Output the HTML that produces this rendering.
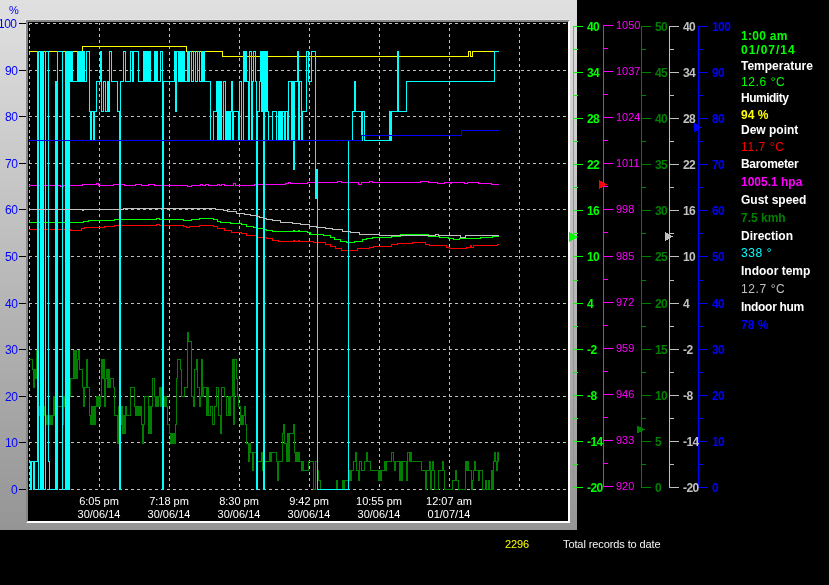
<!DOCTYPE html>
<html><head><meta charset="utf-8"><style>
html,body{margin:0;padding:0;background:#000;width:829px;height:585px;overflow:hidden;position:relative}
.t{position:absolute;font-family:"Liberation Sans",sans-serif;white-space:nowrap;line-height:1}
#hl{position:absolute;left:25px;top:19px;width:545px;height:1px;background:rgba(255,255,255,0.3)}
#hl2{position:absolute;left:25px;top:19px;width:1px;height:80px;background:linear-gradient(rgba(255,255,255,0.3),rgba(255,255,255,0))}
body{-webkit-font-smoothing:antialiased}
.t{will-change:transform}
#frame{position:absolute;left:26px;top:20px;width:540px;height:499px;background:#000;border-style:solid;border-width:2px;border-color:#858585 #fff #fff #858585}
.ax{font-size:12px;font-weight:bold;font-family:"Liberation Sans",sans-serif}
.lb{font-size:12px;letter-spacing:-0.5px;color:#0000ff}
.xl{font-size:11px;color:#fff;text-align:center;width:70px}
.ip{font-size:12px;font-weight:bold;left:741px}
</style></head><body>

<svg width="829" height="585" shape-rendering="crispEdges" style="position:absolute;left:0;top:0"><rect x="0" y="0" width="577" height="4" fill="rgb(224,224,224)"/><rect x="0" y="4" width="577" height="7" fill="rgb(223,223,223)"/><rect x="0" y="11" width="577" height="7" fill="rgb(222,222,222)"/><rect x="0" y="18" width="577" height="7" fill="rgb(221,221,221)"/><rect x="0" y="25" width="577" height="7" fill="rgb(220,220,220)"/><rect x="0" y="32" width="577" height="7" fill="rgb(219,219,219)"/><rect x="0" y="39" width="577" height="7" fill="rgb(218,218,218)"/><rect x="0" y="46" width="577" height="7" fill="rgb(217,217,217)"/><rect x="0" y="53" width="577" height="7" fill="rgb(216,216,216)"/><rect x="0" y="60" width="577" height="8" fill="rgb(215,215,215)"/><rect x="0" y="68" width="577" height="7" fill="rgb(214,214,214)"/><rect x="0" y="75" width="577" height="7" fill="rgb(213,213,213)"/><rect x="0" y="82" width="577" height="7" fill="rgb(212,212,212)"/><rect x="0" y="89" width="577" height="7" fill="rgb(211,211,211)"/><rect x="0" y="96" width="577" height="7" fill="rgb(210,210,210)"/><rect x="0" y="103" width="577" height="7" fill="rgb(209,209,209)"/><rect x="0" y="110" width="577" height="7" fill="rgb(208,208,208)"/><rect x="0" y="117" width="577" height="7" fill="rgb(207,207,207)"/><rect x="0" y="124" width="577" height="7" fill="rgb(206,206,206)"/><rect x="0" y="131" width="577" height="7" fill="rgb(205,205,205)"/><rect x="0" y="138" width="577" height="7" fill="rgb(204,204,204)"/><rect x="0" y="145" width="577" height="7" fill="rgb(203,203,203)"/><rect x="0" y="152" width="577" height="7" fill="rgb(202,202,202)"/><rect x="0" y="159" width="577" height="7" fill="rgb(201,201,201)"/><rect x="0" y="166" width="577" height="7" fill="rgb(200,200,200)"/><rect x="0" y="173" width="577" height="7" fill="rgb(199,199,199)"/><rect x="0" y="180" width="577" height="7" fill="rgb(198,198,198)"/><rect x="0" y="187" width="577" height="7" fill="rgb(197,197,197)"/><rect x="0" y="194" width="577" height="8" fill="rgb(196,196,196)"/><rect x="0" y="202" width="577" height="7" fill="rgb(195,195,195)"/><rect x="0" y="209" width="577" height="7" fill="rgb(194,194,194)"/><rect x="0" y="216" width="577" height="7" fill="rgb(193,193,193)"/><rect x="0" y="223" width="577" height="7" fill="rgb(192,192,192)"/><rect x="0" y="230" width="577" height="7" fill="rgb(191,191,191)"/><rect x="0" y="237" width="577" height="7" fill="rgb(190,190,190)"/><rect x="0" y="244" width="577" height="7" fill="rgb(189,189,189)"/><rect x="0" y="251" width="577" height="7" fill="rgb(188,188,188)"/><rect x="0" y="258" width="577" height="7" fill="rgb(187,187,187)"/><rect x="0" y="265" width="577" height="7" fill="rgb(186,186,186)"/><rect x="0" y="272" width="577" height="7" fill="rgb(185,185,185)"/><rect x="0" y="279" width="577" height="7" fill="rgb(184,184,184)"/><rect x="0" y="286" width="577" height="7" fill="rgb(183,183,183)"/><rect x="0" y="293" width="577" height="7" fill="rgb(182,182,182)"/><rect x="0" y="300" width="577" height="7" fill="rgb(181,181,181)"/><rect x="0" y="307" width="577" height="7" fill="rgb(180,180,180)"/><rect x="0" y="314" width="577" height="7" fill="rgb(179,179,179)"/><rect x="0" y="321" width="577" height="7" fill="rgb(178,178,178)"/><rect x="0" y="328" width="577" height="8" fill="rgb(177,177,177)"/><rect x="0" y="336" width="577" height="7" fill="rgb(176,176,176)"/><rect x="0" y="343" width="577" height="7" fill="rgb(175,175,175)"/><rect x="0" y="350" width="577" height="7" fill="rgb(174,174,174)"/><rect x="0" y="357" width="577" height="7" fill="rgb(173,173,173)"/><rect x="0" y="364" width="577" height="7" fill="rgb(172,172,172)"/><rect x="0" y="371" width="577" height="7" fill="rgb(171,171,171)"/><rect x="0" y="378" width="577" height="7" fill="rgb(170,170,170)"/><rect x="0" y="385" width="577" height="7" fill="rgb(169,169,169)"/><rect x="0" y="392" width="577" height="7" fill="rgb(168,168,168)"/><rect x="0" y="399" width="577" height="7" fill="rgb(167,167,167)"/><rect x="0" y="406" width="577" height="7" fill="rgb(166,166,166)"/><rect x="0" y="413" width="577" height="7" fill="rgb(165,165,165)"/><rect x="0" y="420" width="577" height="7" fill="rgb(164,164,164)"/><rect x="0" y="427" width="577" height="7" fill="rgb(163,163,163)"/><rect x="0" y="434" width="577" height="7" fill="rgb(162,162,162)"/><rect x="0" y="441" width="577" height="7" fill="rgb(161,161,161)"/><rect x="0" y="448" width="577" height="7" fill="rgb(160,160,160)"/><rect x="0" y="455" width="577" height="7" fill="rgb(159,159,159)"/><rect x="0" y="462" width="577" height="8" fill="rgb(158,158,158)"/><rect x="0" y="470" width="577" height="7" fill="rgb(157,157,157)"/><rect x="0" y="477" width="577" height="7" fill="rgb(156,156,156)"/><rect x="0" y="484" width="577" height="7" fill="rgb(155,155,155)"/><rect x="0" y="491" width="577" height="7" fill="rgb(154,154,154)"/><rect x="0" y="498" width="577" height="7" fill="rgb(153,153,153)"/><rect x="0" y="505" width="577" height="7" fill="rgb(152,152,152)"/><rect x="0" y="512" width="577" height="7" fill="rgb(151,151,151)"/><rect x="0" y="519" width="577" height="7" fill="rgb(150,150,150)"/><rect x="0" y="526" width="577" height="4" fill="rgb(149,149,149)"/></svg>
<div id="hl"></div><div id="hl2"></div><div id="frame"></div>

<svg width="829" height="585" viewBox="0 0 829 585" shape-rendering="crispEdges" style="position:absolute;left:0;top:0"><path fill="#c0c0c0" d="M29 23h3v1h-3zM35 23h3v1h-3zM41 23h3v1h-3zM47 23h3v1h-3zM53 23h3v1h-3zM59 23h3v1h-3zM65 23h3v1h-3zM71 23h3v1h-3zM77 23h3v1h-3zM83 23h3v1h-3zM89 23h3v1h-3zM95 23h3v1h-3zM101 23h3v1h-3zM107 23h3v1h-3zM113 23h3v1h-3zM119 23h3v1h-3zM125 23h3v1h-3zM131 23h3v1h-3zM137 23h3v1h-3zM143 23h3v1h-3zM149 23h3v1h-3zM155 23h3v1h-3zM161 23h3v1h-3zM167 23h3v1h-3zM173 23h3v1h-3zM179 23h3v1h-3zM185 23h3v1h-3zM191 23h3v1h-3zM197 23h3v1h-3zM203 23h3v1h-3zM209 23h3v1h-3zM215 23h3v1h-3zM221 23h3v1h-3zM227 23h3v1h-3zM233 23h3v1h-3zM239 23h3v1h-3zM245 23h3v1h-3zM251 23h3v1h-3zM257 23h3v1h-3zM263 23h3v1h-3zM269 23h3v1h-3zM275 23h3v1h-3zM281 23h3v1h-3zM287 23h3v1h-3zM293 23h3v1h-3zM299 23h3v1h-3zM305 23h3v1h-3zM311 23h3v1h-3zM317 23h3v1h-3zM323 23h3v1h-3zM329 23h3v1h-3zM335 23h3v1h-3zM341 23h3v1h-3zM347 23h3v1h-3zM353 23h3v1h-3zM359 23h3v1h-3zM365 23h3v1h-3zM371 23h3v1h-3zM377 23h3v1h-3zM383 23h3v1h-3zM389 23h3v1h-3zM395 23h3v1h-3zM401 23h3v1h-3zM407 23h3v1h-3zM413 23h3v1h-3zM419 23h3v1h-3zM425 23h3v1h-3zM431 23h3v1h-3zM437 23h3v1h-3zM443 23h3v1h-3zM449 23h3v1h-3zM455 23h3v1h-3zM461 23h3v1h-3zM467 23h3v1h-3zM473 23h3v1h-3zM479 23h3v1h-3zM485 23h3v1h-3zM491 23h3v1h-3zM497 23h3v1h-3zM503 23h3v1h-3zM509 23h3v1h-3zM515 23h3v1h-3zM521 23h3v1h-3zM527 23h3v1h-3zM533 23h3v1h-3zM539 23h3v1h-3zM545 23h3v1h-3zM551 23h3v1h-3zM557 23h3v1h-3zM563 23h3v1h-3zM29 70h3v1h-3zM35 70h3v1h-3zM41 70h3v1h-3zM47 70h3v1h-3zM53 70h3v1h-3zM59 70h3v1h-3zM65 70h3v1h-3zM71 70h3v1h-3zM77 70h3v1h-3zM83 70h3v1h-3zM89 70h3v1h-3zM95 70h3v1h-3zM101 70h3v1h-3zM107 70h3v1h-3zM113 70h3v1h-3zM119 70h3v1h-3zM125 70h3v1h-3zM131 70h3v1h-3zM137 70h3v1h-3zM143 70h3v1h-3zM149 70h3v1h-3zM155 70h3v1h-3zM161 70h3v1h-3zM167 70h3v1h-3zM173 70h3v1h-3zM179 70h3v1h-3zM185 70h3v1h-3zM191 70h3v1h-3zM197 70h3v1h-3zM203 70h3v1h-3zM209 70h3v1h-3zM215 70h3v1h-3zM221 70h3v1h-3zM227 70h3v1h-3zM233 70h3v1h-3zM239 70h3v1h-3zM245 70h3v1h-3zM251 70h3v1h-3zM257 70h3v1h-3zM263 70h3v1h-3zM269 70h3v1h-3zM275 70h3v1h-3zM281 70h3v1h-3zM287 70h3v1h-3zM293 70h3v1h-3zM299 70h3v1h-3zM305 70h3v1h-3zM311 70h3v1h-3zM317 70h3v1h-3zM323 70h3v1h-3zM329 70h3v1h-3zM335 70h3v1h-3zM341 70h3v1h-3zM347 70h3v1h-3zM353 70h3v1h-3zM359 70h3v1h-3zM365 70h3v1h-3zM371 70h3v1h-3zM377 70h3v1h-3zM383 70h3v1h-3zM389 70h3v1h-3zM395 70h3v1h-3zM401 70h3v1h-3zM407 70h3v1h-3zM413 70h3v1h-3zM419 70h3v1h-3zM425 70h3v1h-3zM431 70h3v1h-3zM437 70h3v1h-3zM443 70h3v1h-3zM449 70h3v1h-3zM455 70h3v1h-3zM461 70h3v1h-3zM467 70h3v1h-3zM473 70h3v1h-3zM479 70h3v1h-3zM485 70h3v1h-3zM491 70h3v1h-3zM497 70h3v1h-3zM503 70h3v1h-3zM509 70h3v1h-3zM515 70h3v1h-3zM521 70h3v1h-3zM527 70h3v1h-3zM533 70h3v1h-3zM539 70h3v1h-3zM545 70h3v1h-3zM551 70h3v1h-3zM557 70h3v1h-3zM563 70h3v1h-3zM29 116h3v1h-3zM35 116h3v1h-3zM41 116h3v1h-3zM47 116h3v1h-3zM53 116h3v1h-3zM59 116h3v1h-3zM65 116h3v1h-3zM71 116h3v1h-3zM77 116h3v1h-3zM83 116h3v1h-3zM89 116h3v1h-3zM95 116h3v1h-3zM101 116h3v1h-3zM107 116h3v1h-3zM113 116h3v1h-3zM119 116h3v1h-3zM125 116h3v1h-3zM131 116h3v1h-3zM137 116h3v1h-3zM143 116h3v1h-3zM149 116h3v1h-3zM155 116h3v1h-3zM161 116h3v1h-3zM167 116h3v1h-3zM173 116h3v1h-3zM179 116h3v1h-3zM185 116h3v1h-3zM191 116h3v1h-3zM197 116h3v1h-3zM203 116h3v1h-3zM209 116h3v1h-3zM215 116h3v1h-3zM221 116h3v1h-3zM227 116h3v1h-3zM233 116h3v1h-3zM239 116h3v1h-3zM245 116h3v1h-3zM251 116h3v1h-3zM257 116h3v1h-3zM263 116h3v1h-3zM269 116h3v1h-3zM275 116h3v1h-3zM281 116h3v1h-3zM287 116h3v1h-3zM293 116h3v1h-3zM299 116h3v1h-3zM305 116h3v1h-3zM311 116h3v1h-3zM317 116h3v1h-3zM323 116h3v1h-3zM329 116h3v1h-3zM335 116h3v1h-3zM341 116h3v1h-3zM347 116h3v1h-3zM353 116h3v1h-3zM359 116h3v1h-3zM365 116h3v1h-3zM371 116h3v1h-3zM377 116h3v1h-3zM383 116h3v1h-3zM389 116h3v1h-3zM395 116h3v1h-3zM401 116h3v1h-3zM407 116h3v1h-3zM413 116h3v1h-3zM419 116h3v1h-3zM425 116h3v1h-3zM431 116h3v1h-3zM437 116h3v1h-3zM443 116h3v1h-3zM449 116h3v1h-3zM455 116h3v1h-3zM461 116h3v1h-3zM467 116h3v1h-3zM473 116h3v1h-3zM479 116h3v1h-3zM485 116h3v1h-3zM491 116h3v1h-3zM497 116h3v1h-3zM503 116h3v1h-3zM509 116h3v1h-3zM515 116h3v1h-3zM521 116h3v1h-3zM527 116h3v1h-3zM533 116h3v1h-3zM539 116h3v1h-3zM545 116h3v1h-3zM551 116h3v1h-3zM557 116h3v1h-3zM563 116h3v1h-3zM29 163h3v1h-3zM35 163h3v1h-3zM41 163h3v1h-3zM47 163h3v1h-3zM53 163h3v1h-3zM59 163h3v1h-3zM65 163h3v1h-3zM71 163h3v1h-3zM77 163h3v1h-3zM83 163h3v1h-3zM89 163h3v1h-3zM95 163h3v1h-3zM101 163h3v1h-3zM107 163h3v1h-3zM113 163h3v1h-3zM119 163h3v1h-3zM125 163h3v1h-3zM131 163h3v1h-3zM137 163h3v1h-3zM143 163h3v1h-3zM149 163h3v1h-3zM155 163h3v1h-3zM161 163h3v1h-3zM167 163h3v1h-3zM173 163h3v1h-3zM179 163h3v1h-3zM185 163h3v1h-3zM191 163h3v1h-3zM197 163h3v1h-3zM203 163h3v1h-3zM209 163h3v1h-3zM215 163h3v1h-3zM221 163h3v1h-3zM227 163h3v1h-3zM233 163h3v1h-3zM239 163h3v1h-3zM245 163h3v1h-3zM251 163h3v1h-3zM257 163h3v1h-3zM263 163h3v1h-3zM269 163h3v1h-3zM275 163h3v1h-3zM281 163h3v1h-3zM287 163h3v1h-3zM293 163h3v1h-3zM299 163h3v1h-3zM305 163h3v1h-3zM311 163h3v1h-3zM317 163h3v1h-3zM323 163h3v1h-3zM329 163h3v1h-3zM335 163h3v1h-3zM341 163h3v1h-3zM347 163h3v1h-3zM353 163h3v1h-3zM359 163h3v1h-3zM365 163h3v1h-3zM371 163h3v1h-3zM377 163h3v1h-3zM383 163h3v1h-3zM389 163h3v1h-3zM395 163h3v1h-3zM401 163h3v1h-3zM407 163h3v1h-3zM413 163h3v1h-3zM419 163h3v1h-3zM425 163h3v1h-3zM431 163h3v1h-3zM437 163h3v1h-3zM443 163h3v1h-3zM449 163h3v1h-3zM455 163h3v1h-3zM461 163h3v1h-3zM467 163h3v1h-3zM473 163h3v1h-3zM479 163h3v1h-3zM485 163h3v1h-3zM491 163h3v1h-3zM497 163h3v1h-3zM503 163h3v1h-3zM509 163h3v1h-3zM515 163h3v1h-3zM521 163h3v1h-3zM527 163h3v1h-3zM533 163h3v1h-3zM539 163h3v1h-3zM545 163h3v1h-3zM551 163h3v1h-3zM557 163h3v1h-3zM563 163h3v1h-3zM29 209h3v1h-3zM35 209h3v1h-3zM41 209h3v1h-3zM47 209h3v1h-3zM53 209h3v1h-3zM59 209h3v1h-3zM65 209h3v1h-3zM71 209h3v1h-3zM77 209h3v1h-3zM83 209h3v1h-3zM89 209h3v1h-3zM95 209h3v1h-3zM101 209h3v1h-3zM107 209h3v1h-3zM113 209h3v1h-3zM119 209h3v1h-3zM125 209h3v1h-3zM131 209h3v1h-3zM137 209h3v1h-3zM143 209h3v1h-3zM149 209h3v1h-3zM155 209h3v1h-3zM161 209h3v1h-3zM167 209h3v1h-3zM173 209h3v1h-3zM179 209h3v1h-3zM185 209h3v1h-3zM191 209h3v1h-3zM197 209h3v1h-3zM203 209h3v1h-3zM209 209h3v1h-3zM215 209h3v1h-3zM221 209h3v1h-3zM227 209h3v1h-3zM233 209h3v1h-3zM239 209h3v1h-3zM245 209h3v1h-3zM251 209h3v1h-3zM257 209h3v1h-3zM263 209h3v1h-3zM269 209h3v1h-3zM275 209h3v1h-3zM281 209h3v1h-3zM287 209h3v1h-3zM293 209h3v1h-3zM299 209h3v1h-3zM305 209h3v1h-3zM311 209h3v1h-3zM317 209h3v1h-3zM323 209h3v1h-3zM329 209h3v1h-3zM335 209h3v1h-3zM341 209h3v1h-3zM347 209h3v1h-3zM353 209h3v1h-3zM359 209h3v1h-3zM365 209h3v1h-3zM371 209h3v1h-3zM377 209h3v1h-3zM383 209h3v1h-3zM389 209h3v1h-3zM395 209h3v1h-3zM401 209h3v1h-3zM407 209h3v1h-3zM413 209h3v1h-3zM419 209h3v1h-3zM425 209h3v1h-3zM431 209h3v1h-3zM437 209h3v1h-3zM443 209h3v1h-3zM449 209h3v1h-3zM455 209h3v1h-3zM461 209h3v1h-3zM467 209h3v1h-3zM473 209h3v1h-3zM479 209h3v1h-3zM485 209h3v1h-3zM491 209h3v1h-3zM497 209h3v1h-3zM503 209h3v1h-3zM509 209h3v1h-3zM515 209h3v1h-3zM521 209h3v1h-3zM527 209h3v1h-3zM533 209h3v1h-3zM539 209h3v1h-3zM545 209h3v1h-3zM551 209h3v1h-3zM557 209h3v1h-3zM563 209h3v1h-3zM29 256h3v1h-3zM35 256h3v1h-3zM41 256h3v1h-3zM47 256h3v1h-3zM53 256h3v1h-3zM59 256h3v1h-3zM65 256h3v1h-3zM71 256h3v1h-3zM77 256h3v1h-3zM83 256h3v1h-3zM89 256h3v1h-3zM95 256h3v1h-3zM101 256h3v1h-3zM107 256h3v1h-3zM113 256h3v1h-3zM119 256h3v1h-3zM125 256h3v1h-3zM131 256h3v1h-3zM137 256h3v1h-3zM143 256h3v1h-3zM149 256h3v1h-3zM155 256h3v1h-3zM161 256h3v1h-3zM167 256h3v1h-3zM173 256h3v1h-3zM179 256h3v1h-3zM185 256h3v1h-3zM191 256h3v1h-3zM197 256h3v1h-3zM203 256h3v1h-3zM209 256h3v1h-3zM215 256h3v1h-3zM221 256h3v1h-3zM227 256h3v1h-3zM233 256h3v1h-3zM239 256h3v1h-3zM245 256h3v1h-3zM251 256h3v1h-3zM257 256h3v1h-3zM263 256h3v1h-3zM269 256h3v1h-3zM275 256h3v1h-3zM281 256h3v1h-3zM287 256h3v1h-3zM293 256h3v1h-3zM299 256h3v1h-3zM305 256h3v1h-3zM311 256h3v1h-3zM317 256h3v1h-3zM323 256h3v1h-3zM329 256h3v1h-3zM335 256h3v1h-3zM341 256h3v1h-3zM347 256h3v1h-3zM353 256h3v1h-3zM359 256h3v1h-3zM365 256h3v1h-3zM371 256h3v1h-3zM377 256h3v1h-3zM383 256h3v1h-3zM389 256h3v1h-3zM395 256h3v1h-3zM401 256h3v1h-3zM407 256h3v1h-3zM413 256h3v1h-3zM419 256h3v1h-3zM425 256h3v1h-3zM431 256h3v1h-3zM437 256h3v1h-3zM443 256h3v1h-3zM449 256h3v1h-3zM455 256h3v1h-3zM461 256h3v1h-3zM467 256h3v1h-3zM473 256h3v1h-3zM479 256h3v1h-3zM485 256h3v1h-3zM491 256h3v1h-3zM497 256h3v1h-3zM503 256h3v1h-3zM509 256h3v1h-3zM515 256h3v1h-3zM521 256h3v1h-3zM527 256h3v1h-3zM533 256h3v1h-3zM539 256h3v1h-3zM545 256h3v1h-3zM551 256h3v1h-3zM557 256h3v1h-3zM563 256h3v1h-3zM29 303h3v1h-3zM35 303h3v1h-3zM41 303h3v1h-3zM47 303h3v1h-3zM53 303h3v1h-3zM59 303h3v1h-3zM65 303h3v1h-3zM71 303h3v1h-3zM77 303h3v1h-3zM83 303h3v1h-3zM89 303h3v1h-3zM95 303h3v1h-3zM101 303h3v1h-3zM107 303h3v1h-3zM113 303h3v1h-3zM119 303h3v1h-3zM125 303h3v1h-3zM131 303h3v1h-3zM137 303h3v1h-3zM143 303h3v1h-3zM149 303h3v1h-3zM155 303h3v1h-3zM161 303h3v1h-3zM167 303h3v1h-3zM173 303h3v1h-3zM179 303h3v1h-3zM185 303h3v1h-3zM191 303h3v1h-3zM197 303h3v1h-3zM203 303h3v1h-3zM209 303h3v1h-3zM215 303h3v1h-3zM221 303h3v1h-3zM227 303h3v1h-3zM233 303h3v1h-3zM239 303h3v1h-3zM245 303h3v1h-3zM251 303h3v1h-3zM257 303h3v1h-3zM263 303h3v1h-3zM269 303h3v1h-3zM275 303h3v1h-3zM281 303h3v1h-3zM287 303h3v1h-3zM293 303h3v1h-3zM299 303h3v1h-3zM305 303h3v1h-3zM311 303h3v1h-3zM317 303h3v1h-3zM323 303h3v1h-3zM329 303h3v1h-3zM335 303h3v1h-3zM341 303h3v1h-3zM347 303h3v1h-3zM353 303h3v1h-3zM359 303h3v1h-3zM365 303h3v1h-3zM371 303h3v1h-3zM377 303h3v1h-3zM383 303h3v1h-3zM389 303h3v1h-3zM395 303h3v1h-3zM401 303h3v1h-3zM407 303h3v1h-3zM413 303h3v1h-3zM419 303h3v1h-3zM425 303h3v1h-3zM431 303h3v1h-3zM437 303h3v1h-3zM443 303h3v1h-3zM449 303h3v1h-3zM455 303h3v1h-3zM461 303h3v1h-3zM467 303h3v1h-3zM473 303h3v1h-3zM479 303h3v1h-3zM485 303h3v1h-3zM491 303h3v1h-3zM497 303h3v1h-3zM503 303h3v1h-3zM509 303h3v1h-3zM515 303h3v1h-3zM521 303h3v1h-3zM527 303h3v1h-3zM533 303h3v1h-3zM539 303h3v1h-3zM545 303h3v1h-3zM551 303h3v1h-3zM557 303h3v1h-3zM563 303h3v1h-3zM29 349h3v1h-3zM35 349h3v1h-3zM41 349h3v1h-3zM47 349h3v1h-3zM53 349h3v1h-3zM59 349h3v1h-3zM65 349h3v1h-3zM71 349h3v1h-3zM77 349h3v1h-3zM83 349h3v1h-3zM89 349h3v1h-3zM95 349h3v1h-3zM101 349h3v1h-3zM107 349h3v1h-3zM113 349h3v1h-3zM119 349h3v1h-3zM125 349h3v1h-3zM131 349h3v1h-3zM137 349h3v1h-3zM143 349h3v1h-3zM149 349h3v1h-3zM155 349h3v1h-3zM161 349h3v1h-3zM167 349h3v1h-3zM173 349h3v1h-3zM179 349h3v1h-3zM185 349h3v1h-3zM191 349h3v1h-3zM197 349h3v1h-3zM203 349h3v1h-3zM209 349h3v1h-3zM215 349h3v1h-3zM221 349h3v1h-3zM227 349h3v1h-3zM233 349h3v1h-3zM239 349h3v1h-3zM245 349h3v1h-3zM251 349h3v1h-3zM257 349h3v1h-3zM263 349h3v1h-3zM269 349h3v1h-3zM275 349h3v1h-3zM281 349h3v1h-3zM287 349h3v1h-3zM293 349h3v1h-3zM299 349h3v1h-3zM305 349h3v1h-3zM311 349h3v1h-3zM317 349h3v1h-3zM323 349h3v1h-3zM329 349h3v1h-3zM335 349h3v1h-3zM341 349h3v1h-3zM347 349h3v1h-3zM353 349h3v1h-3zM359 349h3v1h-3zM365 349h3v1h-3zM371 349h3v1h-3zM377 349h3v1h-3zM383 349h3v1h-3zM389 349h3v1h-3zM395 349h3v1h-3zM401 349h3v1h-3zM407 349h3v1h-3zM413 349h3v1h-3zM419 349h3v1h-3zM425 349h3v1h-3zM431 349h3v1h-3zM437 349h3v1h-3zM443 349h3v1h-3zM449 349h3v1h-3zM455 349h3v1h-3zM461 349h3v1h-3zM467 349h3v1h-3zM473 349h3v1h-3zM479 349h3v1h-3zM485 349h3v1h-3zM491 349h3v1h-3zM497 349h3v1h-3zM503 349h3v1h-3zM509 349h3v1h-3zM515 349h3v1h-3zM521 349h3v1h-3zM527 349h3v1h-3zM533 349h3v1h-3zM539 349h3v1h-3zM545 349h3v1h-3zM551 349h3v1h-3zM557 349h3v1h-3zM563 349h3v1h-3zM29 396h3v1h-3zM35 396h3v1h-3zM41 396h3v1h-3zM47 396h3v1h-3zM53 396h3v1h-3zM59 396h3v1h-3zM65 396h3v1h-3zM71 396h3v1h-3zM77 396h3v1h-3zM83 396h3v1h-3zM89 396h3v1h-3zM95 396h3v1h-3zM101 396h3v1h-3zM107 396h3v1h-3zM113 396h3v1h-3zM119 396h3v1h-3zM125 396h3v1h-3zM131 396h3v1h-3zM137 396h3v1h-3zM143 396h3v1h-3zM149 396h3v1h-3zM155 396h3v1h-3zM161 396h3v1h-3zM167 396h3v1h-3zM173 396h3v1h-3zM179 396h3v1h-3zM185 396h3v1h-3zM191 396h3v1h-3zM197 396h3v1h-3zM203 396h3v1h-3zM209 396h3v1h-3zM215 396h3v1h-3zM221 396h3v1h-3zM227 396h3v1h-3zM233 396h3v1h-3zM239 396h3v1h-3zM245 396h3v1h-3zM251 396h3v1h-3zM257 396h3v1h-3zM263 396h3v1h-3zM269 396h3v1h-3zM275 396h3v1h-3zM281 396h3v1h-3zM287 396h3v1h-3zM293 396h3v1h-3zM299 396h3v1h-3zM305 396h3v1h-3zM311 396h3v1h-3zM317 396h3v1h-3zM323 396h3v1h-3zM329 396h3v1h-3zM335 396h3v1h-3zM341 396h3v1h-3zM347 396h3v1h-3zM353 396h3v1h-3zM359 396h3v1h-3zM365 396h3v1h-3zM371 396h3v1h-3zM377 396h3v1h-3zM383 396h3v1h-3zM389 396h3v1h-3zM395 396h3v1h-3zM401 396h3v1h-3zM407 396h3v1h-3zM413 396h3v1h-3zM419 396h3v1h-3zM425 396h3v1h-3zM431 396h3v1h-3zM437 396h3v1h-3zM443 396h3v1h-3zM449 396h3v1h-3zM455 396h3v1h-3zM461 396h3v1h-3zM467 396h3v1h-3zM473 396h3v1h-3zM479 396h3v1h-3zM485 396h3v1h-3zM491 396h3v1h-3zM497 396h3v1h-3zM503 396h3v1h-3zM509 396h3v1h-3zM515 396h3v1h-3zM521 396h3v1h-3zM527 396h3v1h-3zM533 396h3v1h-3zM539 396h3v1h-3zM545 396h3v1h-3zM551 396h3v1h-3zM557 396h3v1h-3zM563 396h3v1h-3zM29 442h3v1h-3zM35 442h3v1h-3zM41 442h3v1h-3zM47 442h3v1h-3zM53 442h3v1h-3zM59 442h3v1h-3zM65 442h3v1h-3zM71 442h3v1h-3zM77 442h3v1h-3zM83 442h3v1h-3zM89 442h3v1h-3zM95 442h3v1h-3zM101 442h3v1h-3zM107 442h3v1h-3zM113 442h3v1h-3zM119 442h3v1h-3zM125 442h3v1h-3zM131 442h3v1h-3zM137 442h3v1h-3zM143 442h3v1h-3zM149 442h3v1h-3zM155 442h3v1h-3zM161 442h3v1h-3zM167 442h3v1h-3zM173 442h3v1h-3zM179 442h3v1h-3zM185 442h3v1h-3zM191 442h3v1h-3zM197 442h3v1h-3zM203 442h3v1h-3zM209 442h3v1h-3zM215 442h3v1h-3zM221 442h3v1h-3zM227 442h3v1h-3zM233 442h3v1h-3zM239 442h3v1h-3zM245 442h3v1h-3zM251 442h3v1h-3zM257 442h3v1h-3zM263 442h3v1h-3zM269 442h3v1h-3zM275 442h3v1h-3zM281 442h3v1h-3zM287 442h3v1h-3zM293 442h3v1h-3zM299 442h3v1h-3zM305 442h3v1h-3zM311 442h3v1h-3zM317 442h3v1h-3zM323 442h3v1h-3zM329 442h3v1h-3zM335 442h3v1h-3zM341 442h3v1h-3zM347 442h3v1h-3zM353 442h3v1h-3zM359 442h3v1h-3zM365 442h3v1h-3zM371 442h3v1h-3zM377 442h3v1h-3zM383 442h3v1h-3zM389 442h3v1h-3zM395 442h3v1h-3zM401 442h3v1h-3zM407 442h3v1h-3zM413 442h3v1h-3zM419 442h3v1h-3zM425 442h3v1h-3zM431 442h3v1h-3zM437 442h3v1h-3zM443 442h3v1h-3zM449 442h3v1h-3zM455 442h3v1h-3zM461 442h3v1h-3zM467 442h3v1h-3zM473 442h3v1h-3zM479 442h3v1h-3zM485 442h3v1h-3zM491 442h3v1h-3zM497 442h3v1h-3zM503 442h3v1h-3zM509 442h3v1h-3zM515 442h3v1h-3zM521 442h3v1h-3zM527 442h3v1h-3zM533 442h3v1h-3zM539 442h3v1h-3zM545 442h3v1h-3zM551 442h3v1h-3zM557 442h3v1h-3zM563 442h3v1h-3zM29 489h3v1h-3zM35 489h3v1h-3zM41 489h3v1h-3zM47 489h3v1h-3zM53 489h3v1h-3zM59 489h3v1h-3zM65 489h3v1h-3zM71 489h3v1h-3zM77 489h3v1h-3zM83 489h3v1h-3zM89 489h3v1h-3zM95 489h3v1h-3zM101 489h3v1h-3zM107 489h3v1h-3zM113 489h3v1h-3zM119 489h3v1h-3zM125 489h3v1h-3zM131 489h3v1h-3zM137 489h3v1h-3zM143 489h3v1h-3zM149 489h3v1h-3zM155 489h3v1h-3zM161 489h3v1h-3zM167 489h3v1h-3zM173 489h3v1h-3zM179 489h3v1h-3zM185 489h3v1h-3zM191 489h3v1h-3zM197 489h3v1h-3zM203 489h3v1h-3zM209 489h3v1h-3zM215 489h3v1h-3zM221 489h3v1h-3zM227 489h3v1h-3zM233 489h3v1h-3zM239 489h3v1h-3zM245 489h3v1h-3zM251 489h3v1h-3zM257 489h3v1h-3zM263 489h3v1h-3zM269 489h3v1h-3zM275 489h3v1h-3zM281 489h3v1h-3zM287 489h3v1h-3zM293 489h3v1h-3zM299 489h3v1h-3zM305 489h3v1h-3zM311 489h3v1h-3zM317 489h3v1h-3zM323 489h3v1h-3zM329 489h3v1h-3zM335 489h3v1h-3zM341 489h3v1h-3zM347 489h3v1h-3zM353 489h3v1h-3zM359 489h3v1h-3zM365 489h3v1h-3zM371 489h3v1h-3zM377 489h3v1h-3zM383 489h3v1h-3zM389 489h3v1h-3zM395 489h3v1h-3zM401 489h3v1h-3zM407 489h3v1h-3zM413 489h3v1h-3zM419 489h3v1h-3zM425 489h3v1h-3zM431 489h3v1h-3zM437 489h3v1h-3zM443 489h3v1h-3zM449 489h3v1h-3zM455 489h3v1h-3zM461 489h3v1h-3zM467 489h3v1h-3zM473 489h3v1h-3zM479 489h3v1h-3zM485 489h3v1h-3zM491 489h3v1h-3zM497 489h3v1h-3zM503 489h3v1h-3zM509 489h3v1h-3zM515 489h3v1h-3zM521 489h3v1h-3zM527 489h3v1h-3zM533 489h3v1h-3zM539 489h3v1h-3zM545 489h3v1h-3zM551 489h3v1h-3zM557 489h3v1h-3zM563 489h3v1h-3zM29 23h1v2h-1zM29 28h1v3h-1zM29 34h1v3h-1zM29 40h1v3h-1zM29 46h1v3h-1zM29 52h1v3h-1zM29 58h1v3h-1zM29 64h1v3h-1zM29 70h1v3h-1zM29 76h1v3h-1zM29 82h1v3h-1zM29 88h1v3h-1zM29 94h1v3h-1zM29 100h1v3h-1zM29 106h1v3h-1zM29 112h1v3h-1zM29 118h1v3h-1zM29 124h1v3h-1zM29 130h1v3h-1zM29 136h1v3h-1zM29 142h1v3h-1zM29 148h1v3h-1zM29 154h1v3h-1zM29 160h1v3h-1zM29 166h1v3h-1zM29 172h1v3h-1zM29 178h1v3h-1zM29 184h1v3h-1zM29 190h1v3h-1zM29 196h1v3h-1zM29 202h1v3h-1zM29 208h1v3h-1zM29 214h1v3h-1zM29 220h1v3h-1zM29 226h1v3h-1zM29 232h1v3h-1zM29 238h1v3h-1zM29 244h1v3h-1zM29 250h1v3h-1zM29 256h1v3h-1zM29 262h1v3h-1zM29 268h1v3h-1zM29 274h1v3h-1zM29 280h1v3h-1zM29 286h1v3h-1zM29 292h1v3h-1zM29 298h1v3h-1zM29 304h1v3h-1zM29 310h1v3h-1zM29 316h1v3h-1zM29 322h1v3h-1zM29 328h1v3h-1zM29 334h1v3h-1zM29 340h1v3h-1zM29 346h1v3h-1zM29 352h1v3h-1zM29 358h1v3h-1zM29 364h1v3h-1zM29 370h1v3h-1zM29 376h1v3h-1zM29 382h1v3h-1zM29 388h1v3h-1zM29 394h1v3h-1zM29 400h1v3h-1zM29 406h1v3h-1zM29 412h1v3h-1zM29 418h1v3h-1zM29 424h1v3h-1zM29 430h1v3h-1zM29 436h1v3h-1zM29 442h1v3h-1zM29 448h1v3h-1zM29 454h1v3h-1zM29 460h1v3h-1zM29 466h1v3h-1zM29 472h1v3h-1zM29 478h1v3h-1zM29 484h1v3h-1zM99 23h1v2h-1zM99 28h1v3h-1zM99 34h1v3h-1zM99 40h1v3h-1zM99 46h1v3h-1zM99 52h1v3h-1zM99 58h1v3h-1zM99 64h1v3h-1zM99 70h1v3h-1zM99 76h1v3h-1zM99 82h1v3h-1zM99 88h1v3h-1zM99 94h1v3h-1zM99 100h1v3h-1zM99 106h1v3h-1zM99 112h1v3h-1zM99 118h1v3h-1zM99 124h1v3h-1zM99 130h1v3h-1zM99 136h1v3h-1zM99 142h1v3h-1zM99 148h1v3h-1zM99 154h1v3h-1zM99 160h1v3h-1zM99 166h1v3h-1zM99 172h1v3h-1zM99 178h1v3h-1zM99 184h1v3h-1zM99 190h1v3h-1zM99 196h1v3h-1zM99 202h1v3h-1zM99 208h1v3h-1zM99 214h1v3h-1zM99 220h1v3h-1zM99 226h1v3h-1zM99 232h1v3h-1zM99 238h1v3h-1zM99 244h1v3h-1zM99 250h1v3h-1zM99 256h1v3h-1zM99 262h1v3h-1zM99 268h1v3h-1zM99 274h1v3h-1zM99 280h1v3h-1zM99 286h1v3h-1zM99 292h1v3h-1zM99 298h1v3h-1zM99 304h1v3h-1zM99 310h1v3h-1zM99 316h1v3h-1zM99 322h1v3h-1zM99 328h1v3h-1zM99 334h1v3h-1zM99 340h1v3h-1zM99 346h1v3h-1zM99 352h1v3h-1zM99 358h1v3h-1zM99 364h1v3h-1zM99 370h1v3h-1zM99 376h1v3h-1zM99 382h1v3h-1zM99 388h1v3h-1zM99 394h1v3h-1zM99 400h1v3h-1zM99 406h1v3h-1zM99 412h1v3h-1zM99 418h1v3h-1zM99 424h1v3h-1zM99 430h1v3h-1zM99 436h1v3h-1zM99 442h1v3h-1zM99 448h1v3h-1zM99 454h1v3h-1zM99 460h1v3h-1zM99 466h1v3h-1zM99 472h1v3h-1zM99 478h1v3h-1zM99 484h1v3h-1zM169 23h1v2h-1zM169 28h1v3h-1zM169 34h1v3h-1zM169 40h1v3h-1zM169 46h1v3h-1zM169 52h1v3h-1zM169 58h1v3h-1zM169 64h1v3h-1zM169 70h1v3h-1zM169 76h1v3h-1zM169 82h1v3h-1zM169 88h1v3h-1zM169 94h1v3h-1zM169 100h1v3h-1zM169 106h1v3h-1zM169 112h1v3h-1zM169 118h1v3h-1zM169 124h1v3h-1zM169 130h1v3h-1zM169 136h1v3h-1zM169 142h1v3h-1zM169 148h1v3h-1zM169 154h1v3h-1zM169 160h1v3h-1zM169 166h1v3h-1zM169 172h1v3h-1zM169 178h1v3h-1zM169 184h1v3h-1zM169 190h1v3h-1zM169 196h1v3h-1zM169 202h1v3h-1zM169 208h1v3h-1zM169 214h1v3h-1zM169 220h1v3h-1zM169 226h1v3h-1zM169 232h1v3h-1zM169 238h1v3h-1zM169 244h1v3h-1zM169 250h1v3h-1zM169 256h1v3h-1zM169 262h1v3h-1zM169 268h1v3h-1zM169 274h1v3h-1zM169 280h1v3h-1zM169 286h1v3h-1zM169 292h1v3h-1zM169 298h1v3h-1zM169 304h1v3h-1zM169 310h1v3h-1zM169 316h1v3h-1zM169 322h1v3h-1zM169 328h1v3h-1zM169 334h1v3h-1zM169 340h1v3h-1zM169 346h1v3h-1zM169 352h1v3h-1zM169 358h1v3h-1zM169 364h1v3h-1zM169 370h1v3h-1zM169 376h1v3h-1zM169 382h1v3h-1zM169 388h1v3h-1zM169 394h1v3h-1zM169 400h1v3h-1zM169 406h1v3h-1zM169 412h1v3h-1zM169 418h1v3h-1zM169 424h1v3h-1zM169 430h1v3h-1zM169 436h1v3h-1zM169 442h1v3h-1zM169 448h1v3h-1zM169 454h1v3h-1zM169 460h1v3h-1zM169 466h1v3h-1zM169 472h1v3h-1zM169 478h1v3h-1zM169 484h1v3h-1zM239 23h1v2h-1zM239 28h1v3h-1zM239 34h1v3h-1zM239 40h1v3h-1zM239 46h1v3h-1zM239 52h1v3h-1zM239 58h1v3h-1zM239 64h1v3h-1zM239 70h1v3h-1zM239 76h1v3h-1zM239 82h1v3h-1zM239 88h1v3h-1zM239 94h1v3h-1zM239 100h1v3h-1zM239 106h1v3h-1zM239 112h1v3h-1zM239 118h1v3h-1zM239 124h1v3h-1zM239 130h1v3h-1zM239 136h1v3h-1zM239 142h1v3h-1zM239 148h1v3h-1zM239 154h1v3h-1zM239 160h1v3h-1zM239 166h1v3h-1zM239 172h1v3h-1zM239 178h1v3h-1zM239 184h1v3h-1zM239 190h1v3h-1zM239 196h1v3h-1zM239 202h1v3h-1zM239 208h1v3h-1zM239 214h1v3h-1zM239 220h1v3h-1zM239 226h1v3h-1zM239 232h1v3h-1zM239 238h1v3h-1zM239 244h1v3h-1zM239 250h1v3h-1zM239 256h1v3h-1zM239 262h1v3h-1zM239 268h1v3h-1zM239 274h1v3h-1zM239 280h1v3h-1zM239 286h1v3h-1zM239 292h1v3h-1zM239 298h1v3h-1zM239 304h1v3h-1zM239 310h1v3h-1zM239 316h1v3h-1zM239 322h1v3h-1zM239 328h1v3h-1zM239 334h1v3h-1zM239 340h1v3h-1zM239 346h1v3h-1zM239 352h1v3h-1zM239 358h1v3h-1zM239 364h1v3h-1zM239 370h1v3h-1zM239 376h1v3h-1zM239 382h1v3h-1zM239 388h1v3h-1zM239 394h1v3h-1zM239 400h1v3h-1zM239 406h1v3h-1zM239 412h1v3h-1zM239 418h1v3h-1zM239 424h1v3h-1zM239 430h1v3h-1zM239 436h1v3h-1zM239 442h1v3h-1zM239 448h1v3h-1zM239 454h1v3h-1zM239 460h1v3h-1zM239 466h1v3h-1zM239 472h1v3h-1zM239 478h1v3h-1zM239 484h1v3h-1zM309 23h1v2h-1zM309 28h1v3h-1zM309 34h1v3h-1zM309 40h1v3h-1zM309 46h1v3h-1zM309 52h1v3h-1zM309 58h1v3h-1zM309 64h1v3h-1zM309 70h1v3h-1zM309 76h1v3h-1zM309 82h1v3h-1zM309 88h1v3h-1zM309 94h1v3h-1zM309 100h1v3h-1zM309 106h1v3h-1zM309 112h1v3h-1zM309 118h1v3h-1zM309 124h1v3h-1zM309 130h1v3h-1zM309 136h1v3h-1zM309 142h1v3h-1zM309 148h1v3h-1zM309 154h1v3h-1zM309 160h1v3h-1zM309 166h1v3h-1zM309 172h1v3h-1zM309 178h1v3h-1zM309 184h1v3h-1zM309 190h1v3h-1zM309 196h1v3h-1zM309 202h1v3h-1zM309 208h1v3h-1zM309 214h1v3h-1zM309 220h1v3h-1zM309 226h1v3h-1zM309 232h1v3h-1zM309 238h1v3h-1zM309 244h1v3h-1zM309 250h1v3h-1zM309 256h1v3h-1zM309 262h1v3h-1zM309 268h1v3h-1zM309 274h1v3h-1zM309 280h1v3h-1zM309 286h1v3h-1zM309 292h1v3h-1zM309 298h1v3h-1zM309 304h1v3h-1zM309 310h1v3h-1zM309 316h1v3h-1zM309 322h1v3h-1zM309 328h1v3h-1zM309 334h1v3h-1zM309 340h1v3h-1zM309 346h1v3h-1zM309 352h1v3h-1zM309 358h1v3h-1zM309 364h1v3h-1zM309 370h1v3h-1zM309 376h1v3h-1zM309 382h1v3h-1zM309 388h1v3h-1zM309 394h1v3h-1zM309 400h1v3h-1zM309 406h1v3h-1zM309 412h1v3h-1zM309 418h1v3h-1zM309 424h1v3h-1zM309 430h1v3h-1zM309 436h1v3h-1zM309 442h1v3h-1zM309 448h1v3h-1zM309 454h1v3h-1zM309 460h1v3h-1zM309 466h1v3h-1zM309 472h1v3h-1zM309 478h1v3h-1zM309 484h1v3h-1zM379 23h1v2h-1zM379 28h1v3h-1zM379 34h1v3h-1zM379 40h1v3h-1zM379 46h1v3h-1zM379 52h1v3h-1zM379 58h1v3h-1zM379 64h1v3h-1zM379 70h1v3h-1zM379 76h1v3h-1zM379 82h1v3h-1zM379 88h1v3h-1zM379 94h1v3h-1zM379 100h1v3h-1zM379 106h1v3h-1zM379 112h1v3h-1zM379 118h1v3h-1zM379 124h1v3h-1zM379 130h1v3h-1zM379 136h1v3h-1zM379 142h1v3h-1zM379 148h1v3h-1zM379 154h1v3h-1zM379 160h1v3h-1zM379 166h1v3h-1zM379 172h1v3h-1zM379 178h1v3h-1zM379 184h1v3h-1zM379 190h1v3h-1zM379 196h1v3h-1zM379 202h1v3h-1zM379 208h1v3h-1zM379 214h1v3h-1zM379 220h1v3h-1zM379 226h1v3h-1zM379 232h1v3h-1zM379 238h1v3h-1zM379 244h1v3h-1zM379 250h1v3h-1zM379 256h1v3h-1zM379 262h1v3h-1zM379 268h1v3h-1zM379 274h1v3h-1zM379 280h1v3h-1zM379 286h1v3h-1zM379 292h1v3h-1zM379 298h1v3h-1zM379 304h1v3h-1zM379 310h1v3h-1zM379 316h1v3h-1zM379 322h1v3h-1zM379 328h1v3h-1zM379 334h1v3h-1zM379 340h1v3h-1zM379 346h1v3h-1zM379 352h1v3h-1zM379 358h1v3h-1zM379 364h1v3h-1zM379 370h1v3h-1zM379 376h1v3h-1zM379 382h1v3h-1zM379 388h1v3h-1zM379 394h1v3h-1zM379 400h1v3h-1zM379 406h1v3h-1zM379 412h1v3h-1zM379 418h1v3h-1zM379 424h1v3h-1zM379 430h1v3h-1zM379 436h1v3h-1zM379 442h1v3h-1zM379 448h1v3h-1zM379 454h1v3h-1zM379 460h1v3h-1zM379 466h1v3h-1zM379 472h1v3h-1zM379 478h1v3h-1zM379 484h1v3h-1zM449 23h1v2h-1zM449 28h1v3h-1zM449 34h1v3h-1zM449 40h1v3h-1zM449 46h1v3h-1zM449 52h1v3h-1zM449 58h1v3h-1zM449 64h1v3h-1zM449 70h1v3h-1zM449 76h1v3h-1zM449 82h1v3h-1zM449 88h1v3h-1zM449 94h1v3h-1zM449 100h1v3h-1zM449 106h1v3h-1zM449 112h1v3h-1zM449 118h1v3h-1zM449 124h1v3h-1zM449 130h1v3h-1zM449 136h1v3h-1zM449 142h1v3h-1zM449 148h1v3h-1zM449 154h1v3h-1zM449 160h1v3h-1zM449 166h1v3h-1zM449 172h1v3h-1zM449 178h1v3h-1zM449 184h1v3h-1zM449 190h1v3h-1zM449 196h1v3h-1zM449 202h1v3h-1zM449 208h1v3h-1zM449 214h1v3h-1zM449 220h1v3h-1zM449 226h1v3h-1zM449 232h1v3h-1zM449 238h1v3h-1zM449 244h1v3h-1zM449 250h1v3h-1zM449 256h1v3h-1zM449 262h1v3h-1zM449 268h1v3h-1zM449 274h1v3h-1zM449 280h1v3h-1zM449 286h1v3h-1zM449 292h1v3h-1zM449 298h1v3h-1zM449 304h1v3h-1zM449 310h1v3h-1zM449 316h1v3h-1zM449 322h1v3h-1zM449 328h1v3h-1zM449 334h1v3h-1zM449 340h1v3h-1zM449 346h1v3h-1zM449 352h1v3h-1zM449 358h1v3h-1zM449 364h1v3h-1zM449 370h1v3h-1zM449 376h1v3h-1zM449 382h1v3h-1zM449 388h1v3h-1zM449 394h1v3h-1zM449 400h1v3h-1zM449 406h1v3h-1zM449 412h1v3h-1zM449 418h1v3h-1zM449 424h1v3h-1zM449 430h1v3h-1zM449 436h1v3h-1zM449 442h1v3h-1zM449 448h1v3h-1zM449 454h1v3h-1zM449 460h1v3h-1zM449 466h1v3h-1zM449 472h1v3h-1zM449 478h1v3h-1zM449 484h1v3h-1zM519 23h1v2h-1zM519 28h1v3h-1zM519 34h1v3h-1zM519 40h1v3h-1zM519 46h1v3h-1zM519 52h1v3h-1zM519 58h1v3h-1zM519 64h1v3h-1zM519 70h1v3h-1zM519 76h1v3h-1zM519 82h1v3h-1zM519 88h1v3h-1zM519 94h1v3h-1zM519 100h1v3h-1zM519 106h1v3h-1zM519 112h1v3h-1zM519 118h1v3h-1zM519 124h1v3h-1zM519 130h1v3h-1zM519 136h1v3h-1zM519 142h1v3h-1zM519 148h1v3h-1zM519 154h1v3h-1zM519 160h1v3h-1zM519 166h1v3h-1zM519 172h1v3h-1zM519 178h1v3h-1zM519 184h1v3h-1zM519 190h1v3h-1zM519 196h1v3h-1zM519 202h1v3h-1zM519 208h1v3h-1zM519 214h1v3h-1zM519 220h1v3h-1zM519 226h1v3h-1zM519 232h1v3h-1zM519 238h1v3h-1zM519 244h1v3h-1zM519 250h1v3h-1zM519 256h1v3h-1zM519 262h1v3h-1zM519 268h1v3h-1zM519 274h1v3h-1zM519 280h1v3h-1zM519 286h1v3h-1zM519 292h1v3h-1zM519 298h1v3h-1zM519 304h1v3h-1zM519 310h1v3h-1zM519 316h1v3h-1zM519 322h1v3h-1zM519 328h1v3h-1zM519 334h1v3h-1zM519 340h1v3h-1zM519 346h1v3h-1zM519 352h1v3h-1zM519 358h1v3h-1zM519 364h1v3h-1zM519 370h1v3h-1zM519 376h1v3h-1zM519 382h1v3h-1zM519 388h1v3h-1zM519 394h1v3h-1zM519 400h1v3h-1zM519 406h1v3h-1zM519 412h1v3h-1zM519 418h1v3h-1zM519 424h1v3h-1zM519 430h1v3h-1zM519 436h1v3h-1zM519 442h1v3h-1zM519 448h1v3h-1zM519 454h1v3h-1zM519 460h1v3h-1zM519 466h1v3h-1zM519 472h1v3h-1zM519 478h1v3h-1zM519 484h1v3h-1z"/><path fill="#00ff00" d="M83 221h1v2h-1zM88 220h1v2h-1zM114 219h1v2h-1zM156 218h1v2h-1zM159 218h1v2h-1zM183 219h1v2h-1zM191 219h1v2h-1zM199 218h1v2h-1zM213 218h1v2h-1zM217 219h1v3h-1zM220 221h1v2h-1zM230 222h1v2h-1zM241 223h1v2h-1zM246 224h1v3h-1zM253 226h1v2h-1zM257 227h1v2h-1zM263 228h1v2h-1zM266 229h1v2h-1zM272 230h1v2h-1zM293 230h1v2h-1zM294 230h1v2h-1zM298 230h1v2h-1zM299 230h1v2h-1zM307 231h1v2h-1zM310 232h1v3h-1zM323 234h1v2h-1zM330 235h1v3h-1zM334 237h1v3h-1zM340 239h1v3h-1zM346 241h1v2h-1zM354 241h1v2h-1zM362 239h1v3h-1zM366 238h1v2h-1zM372 237h1v2h-1zM391 236h1v2h-1zM400 234h1v3h-1zM428 234h1v3h-1zM439 236h1v2h-1zM448 237h1v2h-1zM453 238h1v2h-1zM459 238h1v2h-1zM480 237h1v2h-1zM492 236h1v2h-1zM29 222h54v1h-54zM83 221h5v1h-5zM88 220h26v1h-26zM114 219h42v1h-42zM156 218h3v1h-3zM159 219h24v1h-24zM183 220h8v1h-8zM191 219h8v1h-8zM199 218h14v1h-14zM213 219h4v1h-4zM217 221h3v1h-3zM220 222h10v1h-10zM230 223h11v1h-11zM241 224h5v1h-5zM246 226h7v1h-7zM253 227h4v1h-4zM257 228h6v1h-6zM263 229h3v1h-3zM266 230h6v1h-6zM272 231h21v1h-21zM293 230h1v1h-1zM294 231h4v1h-4zM298 230h1v1h-1zM299 231h8v1h-8zM307 232h3v1h-3zM310 234h13v1h-13zM323 235h7v1h-7zM330 237h4v1h-4zM334 239h6v1h-6zM340 241h6v1h-6zM346 242h8v1h-8zM354 241h8v1h-8zM362 239h4v1h-4zM366 238h6v1h-6zM372 237h19v1h-19zM391 236h9v1h-9zM400 234h28v1h-28zM428 236h11v1h-11zM439 237h9v1h-9zM448 238h5v1h-5zM453 239h6v1h-6zM459 238h21v1h-21zM480 237h12v1h-12zM492 236h7v1h-7z"/><path fill="#ffff00" d="M82 46h1v6h-1zM186 46h1v6h-1zM222 51h1v6h-1zM468 51h1v6h-1zM470 51h1v6h-1zM472 51h1v6h-1zM29 51h53v1h-53zM82 46h104v1h-104zM186 51h36v1h-36zM222 56h246v1h-246zM468 51h2v1h-2zM470 56h2v1h-2zM472 51h27v1h-27z"/><path fill="#ff0000" d="M70 229h1v2h-1zM81 228h1v3h-1zM84 227h1v2h-1zM104 226h1v2h-1zM114 225h1v2h-1zM156 224h1v2h-1zM159 224h1v2h-1zM183 225h1v2h-1zM186 226h1v2h-1zM189 226h1v2h-1zM199 225h1v2h-1zM213 225h1v2h-1zM217 226h1v3h-1zM224 228h1v3h-1zM231 230h1v3h-1zM241 232h1v2h-1zM246 233h1v3h-1zM256 235h1v3h-1zM266 237h1v2h-1zM272 238h1v3h-1zM278 240h1v2h-1zM293 240h1v2h-1zM294 240h1v2h-1zM298 240h1v2h-1zM299 240h1v2h-1zM313 241h1v2h-1zM325 242h1v3h-1zM330 244h1v3h-1zM335 246h1v3h-1zM341 248h1v3h-1zM357 248h1v3h-1zM369 247h1v2h-1zM373 246h1v2h-1zM391 244h1v3h-1zM397 243h1v2h-1zM412 242h1v2h-1zM425 242h1v3h-1zM429 244h1v2h-1zM446 245h1v3h-1zM449 247h1v2h-1zM466 247h1v2h-1zM470 245h1v3h-1zM471 245h1v3h-1zM473 245h1v3h-1zM497 244h1v2h-1zM29 229h41v1h-41zM70 230h11v1h-11zM81 228h3v1h-3zM84 227h20v1h-20zM104 226h10v1h-10zM114 225h42v1h-42zM156 224h3v1h-3zM159 225h24v1h-24zM183 226h3v1h-3zM186 227h3v1h-3zM189 226h10v1h-10zM199 225h14v1h-14zM213 226h4v1h-4zM217 228h7v1h-7zM224 230h7v1h-7zM231 232h10v1h-10zM241 233h5v1h-5zM246 235h10v1h-10zM256 237h10v1h-10zM266 238h6v1h-6zM272 240h6v1h-6zM278 241h15v1h-15zM293 240h1v1h-1zM294 241h4v1h-4zM298 240h1v1h-1zM299 241h14v1h-14zM313 242h12v1h-12zM325 244h5v1h-5zM330 246h5v1h-5zM335 248h6v1h-6zM341 250h16v1h-16zM357 248h12v1h-12zM369 247h4v1h-4zM373 246h18v1h-18zM391 244h6v1h-6zM397 243h15v1h-15zM412 242h13v1h-13zM425 244h4v1h-4zM429 245h17v1h-17zM446 247h3v1h-3zM449 248h17v1h-17zM466 247h4v1h-4zM470 245h1v1h-1zM471 247h2v1h-2zM473 245h24v1h-24zM497 244h2v1h-2z"/><path fill="#ff00ff" d="M60 185h1v2h-1zM63 185h1v2h-1zM82 184h1v2h-1zM96 183h1v2h-1zM98 183h1v3h-1zM113 184h1v2h-1zM124 184h1v2h-1zM135 184h1v2h-1zM141 184h1v2h-1zM148 184h1v2h-1zM154 184h1v2h-1zM187 185h1v2h-1zM191 185h1v2h-1zM200 184h1v2h-1zM202 184h1v2h-1zM205 184h1v2h-1zM208 184h1v2h-1zM217 184h1v2h-1zM219 184h1v2h-1zM221 184h1v2h-1zM224 184h1v2h-1zM233 183h1v3h-1zM235 183h1v3h-1zM254 184h1v2h-1zM285 183h1v2h-1zM288 182h1v2h-1zM290 182h1v2h-1zM307 182h1v2h-1zM337 181h1v2h-1zM341 181h1v2h-1zM358 182h1v3h-1zM361 182h1v3h-1zM369 181h1v2h-1zM372 181h1v2h-1zM420 181h1v2h-1zM428 181h1v2h-1zM437 182h1v2h-1zM444 182h1v2h-1zM450 182h1v2h-1zM451 182h1v2h-1zM464 182h1v2h-1zM467 182h1v2h-1zM478 182h1v2h-1zM491 183h1v2h-1zM29 185h31v1h-31zM60 186h3v1h-3zM63 185h19v1h-19zM82 184h14v1h-14zM96 183h2v1h-2zM98 185h15v1h-15zM113 184h11v1h-11zM124 185h11v1h-11zM135 184h6v1h-6zM141 185h7v1h-7zM148 184h6v1h-6zM154 185h33v1h-33zM187 186h4v1h-4zM191 185h9v1h-9zM200 184h2v1h-2zM202 185h3v1h-3zM205 184h3v1h-3zM208 185h9v1h-9zM217 184h2v1h-2zM219 185h2v1h-2zM221 184h3v1h-3zM224 185h9v1h-9zM233 183h2v1h-2zM235 185h19v1h-19zM254 184h31v1h-31zM285 183h3v1h-3zM288 182h2v1h-2zM290 183h17v1h-17zM307 182h30v1h-30zM337 181h4v1h-4zM341 182h17v1h-17zM358 184h3v1h-3zM361 182h8v1h-8zM369 181h3v1h-3zM372 182h48v1h-48zM420 181h8v1h-8zM428 182h9v1h-9zM437 183h7v1h-7zM444 182h6v1h-6zM450 183h1v1h-1zM451 182h13v1h-13zM464 183h3v1h-3zM467 182h11v1h-11zM478 183h13v1h-13zM491 184h8v1h-8z"/><path fill="#008000" d="M32 359h1v11h-1zM33 369h1v19h-1zM34 369h1v19h-1zM35 369h1v10h-1zM36 350h1v29h-1zM37 350h1v47h-1zM38 396h1v11h-1zM39 406h1v10h-1zM40 415h1v10h-1zM41 415h1v10h-1zM42 406h1v10h-1zM43 406h1v10h-1zM44 406h1v10h-1zM45 406h1v19h-1zM46 415h1v10h-1zM47 415h1v10h-1zM48 415h1v10h-1zM49 415h1v10h-1zM50 415h1v10h-1zM51 415h1v10h-1zM52 415h1v10h-1zM53 396h1v20h-1zM54 396h1v20h-1zM55 387h1v29h-1zM56 387h1v20h-1zM62 406h1v19h-1zM63 396h1v29h-1zM64 396h1v11h-1zM66 396h1v11h-1zM67 396h1v11h-1zM68 396h1v11h-1zM70 378h1v19h-1zM73 350h1v29h-1zM74 350h1v29h-1zM75 350h1v29h-1zM76 350h1v29h-1zM77 359h1v20h-1zM78 350h1v10h-1zM79 350h1v20h-1zM82 369h1v19h-1zM83 387h1v20h-1zM84 387h1v20h-1zM86 359h1v29h-1zM87 359h1v29h-1zM89 387h1v29h-1zM90 415h1v10h-1zM91 406h1v19h-1zM92 406h1v19h-1zM93 406h1v19h-1zM94 406h1v19h-1zM95 406h1v19h-1zM96 396h1v11h-1zM97 396h1v11h-1zM98 396h1v11h-1zM99 396h1v11h-1zM100 396h1v11h-1zM101 359h1v38h-1zM102 359h1v20h-1zM103 359h1v20h-1zM104 359h1v48h-1zM105 378h1v29h-1zM106 369h1v10h-1zM107 369h1v19h-1zM108 369h1v19h-1zM109 369h1v19h-1zM110 378h1v10h-1zM113 378h1v10h-1zM114 387h1v29h-1zM117 415h1v29h-1zM118 406h1v38h-1zM119 406h1v38h-1zM120 424h1v20h-1zM121 406h1v19h-1zM122 406h1v28h-1zM123 415h1v19h-1zM124 415h1v19h-1zM125 406h1v28h-1zM126 406h1v10h-1zM130 387h1v29h-1zM134 387h1v20h-1zM135 406h1v10h-1zM136 406h1v10h-1zM137 406h1v10h-1zM138 406h1v10h-1zM139 406h1v10h-1zM140 406h1v10h-1zM141 406h1v19h-1zM142 424h1v20h-1zM143 424h1v20h-1zM144 396h1v29h-1zM148 396h1v38h-1zM149 406h1v28h-1zM150 406h1v28h-1zM151 406h1v28h-1zM152 378h1v29h-1zM154 378h1v19h-1zM155 396h1v11h-1zM156 396h1v11h-1zM157 396h1v11h-1zM158 396h1v11h-1zM159 387h1v10h-1zM160 387h1v20h-1zM161 387h1v20h-1zM162 387h1v20h-1zM163 396h1v11h-1zM164 396h1v11h-1zM165 396h1v11h-1zM166 396h1v11h-1zM167 406h1v19h-1zM169 424h1v10h-1zM170 433h1v11h-1zM171 433h1v11h-1zM172 433h1v11h-1zM173 433h1v11h-1zM174 433h1v11h-1zM175 424h1v20h-1zM176 378h1v47h-1zM177 359h1v20h-1zM180 359h1v11h-1zM181 369h1v28h-1zM184 387h1v10h-1zM187 332h1v56h-1zM188 332h1v10h-1zM191 341h1v56h-1zM193 396h1v11h-1zM194 369h1v38h-1zM196 359h1v11h-1zM197 359h1v29h-1zM199 387h1v20h-1zM200 396h1v11h-1zM201 359h1v38h-1zM202 359h1v38h-1zM203 387h1v10h-1zM206 387h1v29h-1zM207 387h1v29h-1zM208 387h1v29h-1zM210 406h1v10h-1zM212 406h1v19h-1zM214 406h1v19h-1zM216 387h1v20h-1zM218 387h1v29h-1zM220 415h1v19h-1zM221 387h1v47h-1zM224 387h1v10h-1zM226 396h1v20h-1zM228 396h1v20h-1zM229 396h1v20h-1zM230 396h1v20h-1zM232 359h1v38h-1zM233 359h1v66h-1zM234 359h1v66h-1zM236 359h1v20h-1zM237 378h1v19h-1zM238 396h1v11h-1zM240 406h1v19h-1zM241 415h1v10h-1zM242 415h1v10h-1zM243 415h1v10h-1zM244 406h1v10h-1zM245 406h1v19h-1zM246 424h1v20h-1zM248 443h1v19h-1zM249 443h1v19h-1zM250 443h1v10h-1zM252 452h1v19h-1zM253 452h1v19h-1zM256 452h1v10h-1zM261 452h1v10h-1zM262 452h1v19h-1zM263 461h1v10h-1zM269 452h1v10h-1zM270 452h1v10h-1zM271 452h1v10h-1zM276 452h1v10h-1zM277 461h1v20h-1zM278 461h1v20h-1zM282 433h1v29h-1zM283 424h1v10h-1zM284 424h1v20h-1zM286 443h1v19h-1zM287 433h1v29h-1zM288 433h1v29h-1zM289 433h1v29h-1zM293 424h1v10h-1zM294 424h1v29h-1zM295 452h1v10h-1zM296 452h1v10h-1zM297 452h1v10h-1zM298 452h1v10h-1zM299 452h1v10h-1zM301 461h1v10h-1zM302 461h1v10h-1zM303 461h1v10h-1zM308 461h1v10h-1zM313 461h1v29h-1zM315 461h1v29h-1zM317 461h1v10h-1zM318 470h1v11h-1zM320 480h1v10h-1zM336 480h1v10h-1zM337 480h1v10h-1zM342 480h1v10h-1zM343 480h1v10h-1zM344 480h1v10h-1zM349 470h1v11h-1zM350 470h1v11h-1zM351 470h1v11h-1zM353 461h1v10h-1zM355 452h1v10h-1zM356 452h1v19h-1zM358 470h1v11h-1zM359 461h1v20h-1zM361 461h1v10h-1zM364 461h1v10h-1zM366 452h1v10h-1zM367 452h1v10h-1zM370 461h1v10h-1zM378 470h1v11h-1zM379 470h1v11h-1zM380 470h1v11h-1zM381 470h1v11h-1zM384 461h1v10h-1zM385 461h1v10h-1zM386 461h1v10h-1zM391 452h1v10h-1zM393 452h1v10h-1zM394 461h1v10h-1zM395 461h1v10h-1zM399 461h1v20h-1zM400 461h1v20h-1zM401 461h1v20h-1zM402 461h1v20h-1zM406 461h1v20h-1zM407 452h1v29h-1zM409 452h1v10h-1zM410 452h1v10h-1zM411 452h1v10h-1zM421 461h1v10h-1zM425 470h1v20h-1zM426 470h1v20h-1zM429 461h1v10h-1zM430 461h1v29h-1zM431 470h1v20h-1zM432 461h1v10h-1zM433 461h1v10h-1zM434 470h1v20h-1zM438 470h1v20h-1zM442 461h1v10h-1zM443 461h1v10h-1zM444 470h1v20h-1zM452 480h1v10h-1zM455 470h1v11h-1zM456 470h1v11h-1zM458 480h1v10h-1zM465 461h1v29h-1zM466 461h1v10h-1zM467 461h1v10h-1zM468 461h1v10h-1zM471 470h1v20h-1zM472 480h1v10h-1zM473 470h1v11h-1zM474 461h1v10h-1zM475 461h1v10h-1zM478 470h1v11h-1zM479 470h1v11h-1zM482 470h1v20h-1zM485 480h1v10h-1zM486 480h1v10h-1zM488 480h1v10h-1zM489 480h1v10h-1zM491 470h1v20h-1zM492 470h1v20h-1zM493 461h1v29h-1zM494 452h1v10h-1zM495 452h1v10h-1zM496 461h1v10h-1zM497 452h1v19h-1zM498 452h1v10h-1zM29 359h3v1h-3zM32 369h1v1h-1zM33 387h1v1h-1zM34 369h1v1h-1zM35 378h1v1h-1zM36 350h1v1h-1zM37 396h1v1h-1zM38 406h1v1h-1zM39 415h1v1h-1zM40 424h1v1h-1zM41 415h1v1h-1zM42 406h1v1h-1zM43 415h1v1h-1zM44 406h1v1h-1zM45 424h1v1h-1zM46 415h1v1h-1zM47 424h1v1h-1zM48 415h1v1h-1zM49 424h1v1h-1zM50 415h1v1h-1zM51 424h1v1h-1zM52 415h1v1h-1zM53 396h1v1h-1zM54 415h1v1h-1zM55 387h1v1h-1zM56 406h6v1h-6zM62 424h1v1h-1zM63 396h1v1h-1zM64 406h2v1h-2zM66 396h1v1h-1zM67 406h1v1h-1zM68 396h2v1h-2zM70 378h3v1h-3zM73 350h1v1h-1zM74 378h1v1h-1zM75 350h1v1h-1zM76 378h1v1h-1zM77 359h1v1h-1zM78 350h1v1h-1zM79 369h3v1h-3zM82 387h1v1h-1zM83 406h1v1h-1zM84 387h2v1h-2zM86 359h1v1h-1zM87 387h2v1h-2zM89 415h1v1h-1zM90 424h1v1h-1zM91 406h1v1h-1zM92 424h1v1h-1zM93 406h1v1h-1zM94 424h1v1h-1zM95 406h1v1h-1zM96 396h1v1h-1zM97 406h1v1h-1zM98 396h1v1h-1zM99 406h1v1h-1zM100 396h1v1h-1zM101 359h1v1h-1zM102 378h1v1h-1zM103 359h1v1h-1zM104 406h1v1h-1zM105 378h1v1h-1zM106 369h1v1h-1zM107 387h1v1h-1zM108 369h1v1h-1zM109 387h1v1h-1zM110 378h3v1h-3zM113 387h1v1h-1zM114 415h3v1h-3zM117 443h1v1h-1zM118 406h1v1h-1zM119 443h1v1h-1zM120 424h1v1h-1zM121 406h1v1h-1zM122 433h1v1h-1zM123 415h1v1h-1zM124 433h1v1h-1zM125 406h1v1h-1zM126 415h4v1h-4zM130 387h4v1h-4zM134 406h1v1h-1zM135 415h1v1h-1zM136 406h1v1h-1zM137 415h1v1h-1zM138 406h1v1h-1zM139 415h1v1h-1zM140 406h1v1h-1zM141 424h1v1h-1zM142 443h1v1h-1zM143 424h1v1h-1zM144 396h4v1h-4zM148 433h1v1h-1zM149 406h1v1h-1zM150 433h1v1h-1zM151 406h1v1h-1zM152 378h2v1h-2zM154 396h1v1h-1zM155 406h1v1h-1zM156 396h1v1h-1zM157 406h1v1h-1zM158 396h1v1h-1zM159 387h1v1h-1zM160 406h1v1h-1zM161 387h1v1h-1zM162 406h1v1h-1zM163 396h1v1h-1zM164 406h1v1h-1zM165 396h1v1h-1zM166 406h1v1h-1zM167 424h2v1h-2zM169 433h1v1h-1zM170 443h1v1h-1zM171 433h1v1h-1zM172 443h1v1h-1zM173 433h1v1h-1zM174 443h1v1h-1zM175 424h1v1h-1zM176 378h1v1h-1zM177 359h3v1h-3zM180 369h1v1h-1zM181 396h3v1h-3zM184 387h3v1h-3zM187 332h1v1h-1zM188 341h3v1h-3zM191 396h2v1h-2zM193 406h1v1h-1zM194 369h2v1h-2zM196 359h1v1h-1zM197 387h2v1h-2zM199 406h1v1h-1zM200 396h1v1h-1zM201 359h1v1h-1zM202 396h1v1h-1zM203 387h3v1h-3zM206 415h1v1h-1zM207 387h1v1h-1zM208 415h2v1h-2zM210 406h2v1h-2zM212 424h2v1h-2zM214 406h2v1h-2zM216 387h2v1h-2zM218 415h2v1h-2zM220 433h1v1h-1zM221 387h3v1h-3zM224 396h2v1h-2zM226 415h2v1h-2zM228 396h1v1h-1zM229 415h1v1h-1zM230 396h2v1h-2zM232 359h1v1h-1zM233 424h1v1h-1zM234 359h2v1h-2zM236 378h1v1h-1zM237 396h1v1h-1zM238 406h2v1h-2zM240 424h1v1h-1zM241 415h1v1h-1zM242 424h1v1h-1zM243 415h1v1h-1zM244 406h1v1h-1zM245 424h1v1h-1zM246 443h2v1h-2zM248 461h1v1h-1zM249 443h1v1h-1zM250 452h2v1h-2zM252 470h1v1h-1zM253 452h3v1h-3zM256 461h5v1h-5zM261 452h1v1h-1zM262 470h1v1h-1zM263 461h6v1h-6zM269 452h1v1h-1zM270 461h1v1h-1zM271 452h5v1h-5zM276 461h1v1h-1zM277 480h1v1h-1zM278 461h4v1h-4zM282 433h1v1h-1zM283 424h1v1h-1zM284 443h2v1h-2zM286 461h1v1h-1zM287 433h1v1h-1zM288 461h1v1h-1zM289 433h4v1h-4zM293 424h1v1h-1zM294 452h1v1h-1zM295 461h1v1h-1zM296 452h1v1h-1zM297 461h1v1h-1zM298 452h1v1h-1zM299 461h2v1h-2zM301 470h1v1h-1zM302 461h1v1h-1zM303 470h5v1h-5zM308 461h5v1h-5zM313 489h2v1h-2zM315 461h2v1h-2zM317 470h1v1h-1zM318 480h2v1h-2zM320 489h16v1h-16zM336 480h1v1h-1zM337 489h5v1h-5zM342 480h1v1h-1zM343 489h1v1h-1zM344 480h5v1h-5zM349 470h1v1h-1zM350 480h1v1h-1zM351 470h2v1h-2zM353 461h2v1h-2zM355 452h1v1h-1zM356 470h2v1h-2zM358 480h1v1h-1zM359 461h2v1h-2zM361 470h3v1h-3zM364 461h2v1h-2zM366 452h1v1h-1zM367 461h3v1h-3zM370 470h8v1h-8zM378 480h1v1h-1zM379 470h1v1h-1zM380 480h1v1h-1zM381 470h3v1h-3zM384 461h1v1h-1zM385 470h1v1h-1zM386 461h5v1h-5zM391 452h2v1h-2zM393 461h1v1h-1zM394 470h1v1h-1zM395 461h4v1h-4zM399 480h1v1h-1zM400 461h1v1h-1zM401 480h1v1h-1zM402 461h4v1h-4zM406 480h1v1h-1zM407 452h2v1h-2zM409 461h1v1h-1zM410 452h1v1h-1zM411 461h10v1h-10zM421 470h4v1h-4zM425 489h1v1h-1zM426 470h3v1h-3zM429 461h1v1h-1zM430 489h1v1h-1zM431 470h1v1h-1zM432 461h1v1h-1zM433 470h1v1h-1zM434 489h4v1h-4zM438 470h4v1h-4zM442 461h1v1h-1zM443 470h1v1h-1zM444 489h8v1h-8zM452 480h3v1h-3zM455 470h1v1h-1zM456 480h2v1h-2zM458 489h7v1h-7zM465 461h1v1h-1zM466 470h1v1h-1zM467 461h1v1h-1zM468 470h3v1h-3zM471 489h1v1h-1zM472 480h1v1h-1zM473 470h1v1h-1zM474 461h1v1h-1zM475 470h3v1h-3zM478 480h1v1h-1zM479 470h3v1h-3zM482 489h3v1h-3zM485 480h1v1h-1zM486 489h2v1h-2zM488 480h1v1h-1zM489 489h2v1h-2zM491 470h1v1h-1zM492 489h1v1h-1zM493 461h1v1h-1zM494 452h1v1h-1zM495 461h1v1h-1zM496 470h1v1h-1zM497 452h1v1h-1zM498 461h1v1h-1z"/><path fill="#00ffff" d="M30 461h1v29h-1zM31 461h1v29h-1zM33 461h1v29h-1zM34 461h1v29h-1zM37 51h1v411h-1zM38 51h1v439h-1zM40 51h1v439h-1zM41 51h1v439h-1zM42 51h1v439h-1zM43 51h1v439h-1zM45 51h1v439h-1zM48 51h1v411h-1zM49 461h1v29h-1zM55 81h1v409h-1zM56 81h1v409h-1zM57 51h1v439h-1zM62 51h1v439h-1zM65 51h1v439h-1zM66 51h1v439h-1zM67 51h1v439h-1zM68 51h1v439h-1zM69 51h1v439h-1zM70 51h1v31h-1zM71 51h1v31h-1zM72 51h1v31h-1zM77 51h1v31h-1zM78 51h1v31h-1zM79 51h1v31h-1zM80 51h1v31h-1zM81 51h1v31h-1zM82 51h1v31h-1zM83 51h1v31h-1zM84 51h1v31h-1zM86 51h1v31h-1zM89 51h1v61h-1zM90 111h1v30h-1zM91 111h1v30h-1zM93 111h1v30h-1zM94 111h1v30h-1zM96 81h1v31h-1zM100 51h1v31h-1zM101 51h1v61h-1zM103 81h1v31h-1zM105 81h1v31h-1zM107 81h1v31h-1zM108 81h1v31h-1zM109 51h1v61h-1zM111 51h1v31h-1zM117 81h1v31h-1zM119 111h1v379h-1zM120 81h1v409h-1zM123 51h1v31h-1zM125 51h1v31h-1zM130 51h1v31h-1zM132 51h1v31h-1zM133 51h1v31h-1zM138 51h1v31h-1zM143 51h1v31h-1zM144 51h1v31h-1zM145 51h1v31h-1zM146 51h1v31h-1zM147 51h1v31h-1zM148 51h1v31h-1zM149 51h1v31h-1zM150 51h1v31h-1zM154 51h1v31h-1zM155 51h1v31h-1zM156 51h1v31h-1zM157 51h1v31h-1zM160 51h1v31h-1zM162 51h1v439h-1zM163 81h1v409h-1zM174 51h1v31h-1zM175 51h1v61h-1zM176 51h1v61h-1zM178 51h1v31h-1zM179 51h1v31h-1zM180 51h1v31h-1zM181 51h1v31h-1zM182 51h1v31h-1zM183 51h1v31h-1zM184 51h1v31h-1zM187 51h1v31h-1zM188 51h1v31h-1zM189 51h1v31h-1zM191 51h1v31h-1zM193 51h1v31h-1zM195 51h1v31h-1zM197 51h1v31h-1zM199 51h1v31h-1zM201 51h1v31h-1zM202 51h1v31h-1zM203 51h1v31h-1zM204 51h1v31h-1zM210 81h1v60h-1zM213 111h1v30h-1zM216 81h1v31h-1zM217 81h1v60h-1zM218 81h1v60h-1zM219 81h1v60h-1zM220 81h1v60h-1zM221 81h1v60h-1zM223 81h1v60h-1zM225 81h1v60h-1zM226 111h1v30h-1zM227 111h1v30h-1zM228 111h1v30h-1zM229 111h1v30h-1zM230 111h1v30h-1zM231 81h1v31h-1zM232 81h1v60h-1zM233 111h1v30h-1zM238 111h1v30h-1zM239 81h1v60h-1zM241 81h1v60h-1zM243 51h1v90h-1zM244 51h1v31h-1zM245 51h1v31h-1zM246 51h1v31h-1zM248 81h1v60h-1zM249 51h1v90h-1zM251 51h1v90h-1zM252 81h1v60h-1zM253 51h1v31h-1zM255 51h1v31h-1zM256 81h1v409h-1zM257 111h1v379h-1zM259 81h1v31h-1zM260 51h1v31h-1zM261 51h1v61h-1zM262 51h1v61h-1zM263 51h1v439h-1zM264 51h1v439h-1zM265 51h1v61h-1zM266 51h1v61h-1zM267 51h1v61h-1zM268 111h1v30h-1zM272 111h1v30h-1zM276 111h1v30h-1zM278 111h1v30h-1zM279 111h1v30h-1zM280 111h1v30h-1zM281 111h1v30h-1zM282 111h1v30h-1zM284 111h1v30h-1zM285 111h1v30h-1zM287 111h1v30h-1zM288 81h1v60h-1zM291 81h1v60h-1zM292 81h1v60h-1zM293 81h1v89h-1zM294 81h1v89h-1zM297 51h1v31h-1zM298 51h1v90h-1zM299 81h1v60h-1zM301 81h1v60h-1zM302 111h1v30h-1zM306 51h1v61h-1zM308 51h1v31h-1zM311 51h1v31h-1zM315 51h1v148h-1zM316 169h1v30h-1zM317 169h1v321h-1zM348 140h1v350h-1zM352 111h1v30h-1zM354 81h1v31h-1zM355 81h1v31h-1zM361 111h1v30h-1zM362 111h1v30h-1zM364 111h1v30h-1zM389 111h1v30h-1zM390 111h1v30h-1zM391 111h1v30h-1zM397 51h1v61h-1zM398 51h1v61h-1zM406 81h1v31h-1zM494 51h1v31h-1zM29 461h1v1h-1zM30 489h1v1h-1zM31 461h2v1h-2zM33 489h1v1h-1zM34 461h3v1h-3zM37 51h1v1h-1zM38 489h2v1h-2zM40 51h1v1h-1zM41 489h1v1h-1zM42 51h1v1h-1zM43 489h2v1h-2zM45 51h3v1h-3zM48 461h1v1h-1zM49 489h6v1h-6zM55 81h1v1h-1zM56 489h1v1h-1zM57 51h5v1h-5zM62 489h3v1h-3zM65 51h1v1h-1zM66 489h1v1h-1zM67 51h1v1h-1zM68 489h1v1h-1zM69 51h1v1h-1zM70 81h1v1h-1zM71 51h1v1h-1zM72 81h5v1h-5zM77 51h1v1h-1zM78 81h1v1h-1zM79 51h1v1h-1zM80 81h1v1h-1zM81 51h1v1h-1zM82 81h1v1h-1zM83 51h1v1h-1zM84 81h2v1h-2zM86 51h3v1h-3zM89 111h1v1h-1zM90 140h1v1h-1zM91 111h2v1h-2zM93 140h1v1h-1zM94 111h2v1h-2zM96 81h4v1h-4zM100 51h1v1h-1zM101 111h2v1h-2zM103 81h2v1h-2zM105 111h2v1h-2zM107 81h1v1h-1zM108 111h1v1h-1zM109 51h2v1h-2zM111 81h6v1h-6zM117 111h2v1h-2zM119 489h1v1h-1zM120 81h3v1h-3zM123 51h2v1h-2zM125 81h5v1h-5zM130 51h2v1h-2zM132 81h1v1h-1zM133 51h5v1h-5zM138 81h5v1h-5zM143 51h1v1h-1zM144 81h1v1h-1zM145 51h1v1h-1zM146 81h1v1h-1zM147 51h1v1h-1zM148 81h1v1h-1zM149 51h1v1h-1zM150 81h4v1h-4zM154 51h1v1h-1zM155 81h1v1h-1zM156 51h1v1h-1zM157 81h3v1h-3zM160 51h2v1h-2zM162 489h1v1h-1zM163 81h11v1h-11zM174 51h1v1h-1zM175 111h1v1h-1zM176 51h2v1h-2zM178 81h1v1h-1zM179 51h1v1h-1zM180 81h1v1h-1zM181 51h1v1h-1zM182 81h1v1h-1zM183 51h1v1h-1zM184 81h3v1h-3zM187 51h1v1h-1zM188 81h1v1h-1zM189 51h2v1h-2zM191 81h2v1h-2zM193 51h2v1h-2zM195 81h2v1h-2zM197 51h2v1h-2zM199 81h2v1h-2zM201 51h1v1h-1zM202 81h1v1h-1zM203 51h1v1h-1zM204 81h6v1h-6zM210 140h3v1h-3zM213 111h3v1h-3zM216 81h1v1h-1zM217 140h1v1h-1zM218 81h1v1h-1zM219 140h1v1h-1zM220 81h1v1h-1zM221 140h2v1h-2zM223 81h2v1h-2zM225 140h1v1h-1zM226 111h1v1h-1zM227 140h1v1h-1zM228 111h1v1h-1zM229 140h1v1h-1zM230 111h1v1h-1zM231 81h1v1h-1zM232 140h1v1h-1zM233 111h5v1h-5zM238 140h1v1h-1zM239 81h2v1h-2zM241 140h2v1h-2zM243 51h1v1h-1zM244 81h1v1h-1zM245 51h1v1h-1zM246 81h2v1h-2zM248 140h1v1h-1zM249 51h2v1h-2zM251 140h1v1h-1zM252 81h1v1h-1zM253 51h2v1h-2zM255 81h1v1h-1zM256 489h1v1h-1zM257 111h2v1h-2zM259 81h1v1h-1zM260 51h1v1h-1zM261 111h1v1h-1zM262 51h1v1h-1zM263 489h1v1h-1zM264 51h1v1h-1zM265 111h1v1h-1zM266 51h1v1h-1zM267 111h1v1h-1zM268 140h4v1h-4zM272 111h4v1h-4zM276 140h2v1h-2zM278 111h1v1h-1zM279 140h1v1h-1zM280 111h1v1h-1zM281 140h1v1h-1zM282 111h2v1h-2zM284 140h1v1h-1zM285 111h2v1h-2zM287 140h1v1h-1zM288 81h3v1h-3zM291 140h1v1h-1zM292 81h1v1h-1zM293 169h1v1h-1zM294 81h3v1h-3zM297 51h1v1h-1zM298 140h1v1h-1zM299 81h2v1h-2zM301 140h1v1h-1zM302 111h4v1h-4zM306 51h2v1h-2zM308 81h3v1h-3zM311 51h4v1h-4zM315 198h1v1h-1zM316 169h1v1h-1zM317 489h31v1h-31zM348 140h4v1h-4zM352 111h2v1h-2zM354 81h1v1h-1zM355 111h6v1h-6zM361 140h1v1h-1zM362 111h2v1h-2zM364 140h25v1h-25zM389 111h1v1h-1zM390 140h1v1h-1zM391 111h6v1h-6zM397 51h1v1h-1zM398 111h8v1h-8zM406 81h88v1h-88zM494 51h5v1h-5z"/><path fill="#c0c0c0" d="M82 209h1v2h-1zM83 209h1v2h-1zM123 208h1v2h-1zM215 208h1v2h-1zM223 209h1v2h-1zM227 210h1v2h-1zM236 211h1v3h-1zM244 213h1v2h-1zM250 214h1v2h-1zM256 215h1v2h-1zM259 216h1v2h-1zM263 217h1v2h-1zM266 218h1v2h-1zM272 219h1v2h-1zM280 220h1v3h-1zM292 222h1v2h-1zM300 223h1v2h-1zM309 224h1v3h-1zM316 226h1v2h-1zM325 227h1v2h-1zM332 228h1v2h-1zM342 229h1v3h-1zM350 231h1v2h-1zM359 232h1v3h-1zM379 234h1v2h-1zM435 234h1v2h-1zM438 234h1v2h-1zM460 235h1v3h-1zM465 235h1v3h-1zM29 209h53v1h-53zM82 210h1v1h-1zM83 209h40v1h-40zM123 208h92v1h-92zM215 209h8v1h-8zM223 210h4v1h-4zM227 211h9v1h-9zM236 213h8v1h-8zM244 214h6v1h-6zM250 215h6v1h-6zM256 216h3v1h-3zM259 217h4v1h-4zM263 218h3v1h-3zM266 219h6v1h-6zM272 220h8v1h-8zM280 222h12v1h-12zM292 223h8v1h-8zM300 224h9v1h-9zM309 226h7v1h-7zM316 227h9v1h-9zM325 228h7v1h-7zM332 229h10v1h-10zM342 231h8v1h-8zM350 232h9v1h-9zM359 234h20v1h-20zM379 235h56v1h-56zM435 234h3v1h-3zM438 235h22v1h-22zM460 237h5v1h-5zM465 235h34v1h-34z"/><path fill="#0000ff" d="M361 135h1v6h-1zM461 130h1v6h-1zM29 140h332v1h-332zM361 135h100v1h-100zM461 130h38v1h-38z"/><path fill="#000" d="M19 23h7v1h-7zM19 70h7v1h-7zM19 116h7v1h-7zM19 163h7v1h-7zM19 209h7v1h-7zM19 256h7v1h-7zM19 303h7v1h-7zM19 349h7v1h-7zM19 396h7v1h-7zM19 442h7v1h-7zM19 489h7v1h-7z"/><path fill="#00ff00" d="M573 26h1v462h-1zM573 26h10v1h-10zM573 49h5v1h-5zM573 72h10v1h-10zM573 95h5v1h-5zM573 118h10v1h-10zM573 141h5v1h-5zM573 164h10v1h-10zM573 187h5v1h-5zM573 210h10v1h-10zM573 233h5v1h-5zM573 256h10v1h-10zM573 280h5v1h-5zM573 303h10v1h-10zM573 326h5v1h-5zM573 349h10v1h-10zM573 372h5v1h-5zM573 395h10v1h-10zM573 418h5v1h-5zM573 441h10v1h-10zM573 464h5v1h-5zM573 487h10v1h-10z"/><path fill="#ff00ff" d="M603 25h1v462h-1zM603 25h10v1h-10zM603 48h5v1h-5zM603 71h10v1h-10zM603 94h5v1h-5zM603 117h10v1h-10zM603 140h5v1h-5zM603 163h10v1h-10zM603 186h5v1h-5zM603 209h10v1h-10zM603 232h5v1h-5zM603 256h10v1h-10zM603 279h5v1h-5zM603 302h10v1h-10zM603 325h5v1h-5zM603 348h10v1h-10zM603 371h5v1h-5zM603 394h10v1h-10zM603 417h5v1h-5zM603 440h10v1h-10zM603 463h5v1h-5zM603 486h10v1h-10z"/><path fill="#008000" d="M641 26h1v462h-1zM641 26h10v1h-10zM641 49h5v1h-5zM641 72h10v1h-10zM641 95h5v1h-5zM641 118h10v1h-10zM641 141h5v1h-5zM641 164h10v1h-10zM641 187h5v1h-5zM641 210h10v1h-10zM641 233h5v1h-5zM641 256h10v1h-10zM641 280h5v1h-5zM641 303h10v1h-10zM641 326h5v1h-5zM641 349h10v1h-10zM641 372h5v1h-5zM641 395h10v1h-10zM641 418h5v1h-5zM641 441h10v1h-10zM641 464h5v1h-5zM641 487h10v1h-10z"/><path fill="#c0c0c0" d="M669 26h1v462h-1zM669 26h10v1h-10zM669 49h5v1h-5zM669 72h10v1h-10zM669 95h5v1h-5zM669 118h10v1h-10zM669 141h5v1h-5zM669 164h10v1h-10zM669 187h5v1h-5zM669 210h10v1h-10zM669 233h5v1h-5zM669 256h10v1h-10zM669 280h5v1h-5zM669 303h10v1h-10zM669 326h5v1h-5zM669 349h10v1h-10zM669 372h5v1h-5zM669 395h10v1h-10zM669 418h5v1h-5zM669 441h10v1h-10zM669 464h5v1h-5zM669 487h10v1h-10z"/><path fill="#0000ff" d="M698 26h1v462h-1zM698 26h10v1h-10zM698 49h5v1h-5zM698 72h10v1h-10zM698 95h5v1h-5zM698 118h10v1h-10zM698 141h5v1h-5zM698 164h10v1h-10zM698 187h5v1h-5zM698 210h10v1h-10zM698 233h5v1h-5zM698 256h10v1h-10zM698 280h5v1h-5zM698 303h10v1h-10zM698 326h5v1h-5zM698 349h10v1h-10zM698 372h5v1h-5zM698 395h10v1h-10zM698 418h5v1h-5zM698 441h10v1h-10zM698 464h5v1h-5zM698 487h10v1h-10z"/><path fill="#ff0000" d="M599 180.0L607 184.5L599 189.0z"/><path fill="#00ff00" d="M569 232.0L578 237L569 242.0z"/><path fill="#008000" d="M637 425.5L645 429.5L637 433.5z"/><path fill="#c0c0c0" d="M665 232.0L673 236.5L665 241.0z"/><path fill="#0000ff" d="M694 123.0L702 127.5L694 132.0z"/></svg>
<div class="t lb" style="right:812px;top:18px">100</div>
<div class="t lb" style="right:812px;top:65px">90</div>
<div class="t lb" style="right:812px;top:111px">80</div>
<div class="t lb" style="right:812px;top:158px">70</div>
<div class="t lb" style="right:812px;top:204px">60</div>
<div class="t lb" style="right:812px;top:251px">50</div>
<div class="t lb" style="right:812px;top:298px">40</div>
<div class="t lb" style="right:812px;top:344px">30</div>
<div class="t lb" style="right:812px;top:391px">20</div>
<div class="t lb" style="right:812px;top:437px">10</div>
<div class="t lb" style="right:812px;top:484px">0</div>
<div class="t lb" style="left:9px;top:5px;font-size:11px;letter-spacing:0">%</div>
<div class="t" style="left:587px;top:21px;font-size:12px;font-weight:bold;letter-spacing:-0.6px;color:#00ff00">40</div>
<div class="t" style="left:587px;top:67px;font-size:12px;font-weight:bold;letter-spacing:-0.6px;color:#00ff00">34</div>
<div class="t" style="left:587px;top:113px;font-size:12px;font-weight:bold;letter-spacing:-0.6px;color:#00ff00">28</div>
<div class="t" style="left:587px;top:159px;font-size:12px;font-weight:bold;letter-spacing:-0.6px;color:#00ff00">22</div>
<div class="t" style="left:587px;top:205px;font-size:12px;font-weight:bold;letter-spacing:-0.6px;color:#00ff00">16</div>
<div class="t" style="left:587px;top:251px;font-size:12px;font-weight:bold;letter-spacing:-0.6px;color:#00ff00">10</div>
<div class="t" style="left:587px;top:298px;font-size:12px;font-weight:bold;letter-spacing:-0.6px;color:#00ff00">4</div>
<div class="t" style="left:587px;top:344px;font-size:12px;font-weight:bold;letter-spacing:-0.6px;color:#00ff00">-2</div>
<div class="t" style="left:587px;top:390px;font-size:12px;font-weight:bold;letter-spacing:-0.6px;color:#00ff00">-8</div>
<div class="t" style="left:587px;top:436px;font-size:12px;font-weight:bold;letter-spacing:-0.6px;color:#00ff00">-14</div>
<div class="t" style="left:587px;top:482px;font-size:12px;font-weight:bold;letter-spacing:-0.6px;color:#00ff00">-20</div>
<div class="t" style="left:616px;top:20px;font-size:11px;color:#ff00ff">1050</div>
<div class="t" style="left:616px;top:66px;font-size:11px;color:#ff00ff">1037</div>
<div class="t" style="left:616px;top:112px;font-size:11px;color:#ff00ff">1024</div>
<div class="t" style="left:616px;top:158px;font-size:11px;color:#ff00ff">1011</div>
<div class="t" style="left:616px;top:204px;font-size:11px;color:#ff00ff">998</div>
<div class="t" style="left:616px;top:251px;font-size:11px;color:#ff00ff">985</div>
<div class="t" style="left:616px;top:297px;font-size:11px;color:#ff00ff">972</div>
<div class="t" style="left:616px;top:343px;font-size:11px;color:#ff00ff">959</div>
<div class="t" style="left:616px;top:389px;font-size:11px;color:#ff00ff">946</div>
<div class="t" style="left:616px;top:435px;font-size:11px;color:#ff00ff">933</div>
<div class="t" style="left:616px;top:481px;font-size:11px;color:#ff00ff">920</div>
<div class="t" style="left:655px;top:21px;font-size:12px;font-weight:bold;letter-spacing:-0.6px;color:#008000">50</div>
<div class="t" style="left:655px;top:67px;font-size:12px;font-weight:bold;letter-spacing:-0.6px;color:#008000">45</div>
<div class="t" style="left:655px;top:113px;font-size:12px;font-weight:bold;letter-spacing:-0.6px;color:#008000">40</div>
<div class="t" style="left:655px;top:159px;font-size:12px;font-weight:bold;letter-spacing:-0.6px;color:#008000">35</div>
<div class="t" style="left:655px;top:205px;font-size:12px;font-weight:bold;letter-spacing:-0.6px;color:#008000">30</div>
<div class="t" style="left:655px;top:251px;font-size:12px;font-weight:bold;letter-spacing:-0.6px;color:#008000">25</div>
<div class="t" style="left:655px;top:298px;font-size:12px;font-weight:bold;letter-spacing:-0.6px;color:#008000">20</div>
<div class="t" style="left:655px;top:344px;font-size:12px;font-weight:bold;letter-spacing:-0.6px;color:#008000">15</div>
<div class="t" style="left:655px;top:390px;font-size:12px;font-weight:bold;letter-spacing:-0.6px;color:#008000">10</div>
<div class="t" style="left:655px;top:436px;font-size:12px;font-weight:bold;letter-spacing:-0.6px;color:#008000">5</div>
<div class="t" style="left:655px;top:482px;font-size:12px;font-weight:bold;letter-spacing:-0.6px;color:#008000">0</div>
<div class="t" style="left:683px;top:21px;font-size:12px;font-weight:bold;letter-spacing:-0.6px;color:#c0c0c0">40</div>
<div class="t" style="left:683px;top:67px;font-size:12px;font-weight:bold;letter-spacing:-0.6px;color:#c0c0c0">34</div>
<div class="t" style="left:683px;top:113px;font-size:12px;font-weight:bold;letter-spacing:-0.6px;color:#c0c0c0">28</div>
<div class="t" style="left:683px;top:159px;font-size:12px;font-weight:bold;letter-spacing:-0.6px;color:#c0c0c0">22</div>
<div class="t" style="left:683px;top:205px;font-size:12px;font-weight:bold;letter-spacing:-0.6px;color:#c0c0c0">16</div>
<div class="t" style="left:683px;top:251px;font-size:12px;font-weight:bold;letter-spacing:-0.6px;color:#c0c0c0">10</div>
<div class="t" style="left:683px;top:298px;font-size:12px;font-weight:bold;letter-spacing:-0.6px;color:#c0c0c0">4</div>
<div class="t" style="left:683px;top:344px;font-size:12px;font-weight:bold;letter-spacing:-0.6px;color:#c0c0c0">-2</div>
<div class="t" style="left:683px;top:390px;font-size:12px;font-weight:bold;letter-spacing:-0.6px;color:#c0c0c0">-8</div>
<div class="t" style="left:683px;top:436px;font-size:12px;font-weight:bold;letter-spacing:-0.6px;color:#c0c0c0">-14</div>
<div class="t" style="left:683px;top:482px;font-size:12px;font-weight:bold;letter-spacing:-0.6px;color:#c0c0c0">-20</div>
<div class="t" style="left:712px;top:21px;font-size:12px;font-weight:bold;letter-spacing:-0.6px;color:#0000ff">100</div>
<div class="t" style="left:712px;top:67px;font-size:12px;font-weight:bold;letter-spacing:-0.6px;color:#0000ff">90</div>
<div class="t" style="left:712px;top:113px;font-size:12px;font-weight:bold;letter-spacing:-0.6px;color:#0000ff">80</div>
<div class="t" style="left:712px;top:159px;font-size:12px;font-weight:bold;letter-spacing:-0.6px;color:#0000ff">70</div>
<div class="t" style="left:712px;top:205px;font-size:12px;font-weight:bold;letter-spacing:-0.6px;color:#0000ff">60</div>
<div class="t" style="left:712px;top:251px;font-size:12px;font-weight:bold;letter-spacing:-0.6px;color:#0000ff">50</div>
<div class="t" style="left:712px;top:298px;font-size:12px;font-weight:bold;letter-spacing:-0.6px;color:#0000ff">40</div>
<div class="t" style="left:712px;top:344px;font-size:12px;font-weight:bold;letter-spacing:-0.6px;color:#0000ff">30</div>
<div class="t" style="left:712px;top:390px;font-size:12px;font-weight:bold;letter-spacing:-0.6px;color:#0000ff">20</div>
<div class="t" style="left:712px;top:436px;font-size:12px;font-weight:bold;letter-spacing:-0.6px;color:#0000ff">10</div>
<div class="t" style="left:712px;top:482px;font-size:12px;font-weight:bold;letter-spacing:-0.6px;color:#0000ff">0</div>
<div class="t xl" style="left:64px;top:496px">6:05 pm</div>
<div class="t xl" style="left:64px;top:509px">30/06/14</div>
<div class="t xl" style="left:134px;top:496px">7:18 pm</div>
<div class="t xl" style="left:134px;top:509px">30/06/14</div>
<div class="t xl" style="left:204px;top:496px">8:30 pm</div>
<div class="t xl" style="left:204px;top:509px">30/06/14</div>
<div class="t xl" style="left:274px;top:496px">9:42 pm</div>
<div class="t xl" style="left:274px;top:509px">30/06/14</div>
<div class="t xl" style="left:344px;top:496px">10:55 pm</div>
<div class="t xl" style="left:344px;top:509px">30/06/14</div>
<div class="t xl" style="left:414px;top:496px">12:07 am</div>
<div class="t xl" style="left:414px;top:509px">01/07/14</div>
<div class="t ip" style="top:30px;color:#00ff00;letter-spacing:0.3px;font-weight:bold">1:00 am</div>
<div class="t ip" style="top:44px;color:#00ff00;letter-spacing:1px;font-weight:bold">01/07/14</div>
<div class="t ip" style="top:60px;color:#fff;letter-spacing:0;font-weight:bold">Temperature</div>
<div class="t ip" style="top:76px;color:#00ff00;letter-spacing:0.6px;font-weight:normal">12.6 °C</div>
<div class="t ip" style="top:92px;color:#fff;letter-spacing:-0.5px;font-weight:bold">Humidity</div>
<div class="t ip" style="top:109px;color:#ffff00;letter-spacing:0;font-weight:bold">94 %</div>
<div class="t ip" style="top:124px;color:#fff;letter-spacing:0;font-weight:bold">Dew point</div>
<div class="t ip" style="top:141px;color:#ff0000;letter-spacing:0.6px;font-weight:normal">11.7 °C</div>
<div class="t ip" style="top:158px;color:#fff;letter-spacing:-0.3px;font-weight:bold">Barometer</div>
<div class="t ip" style="top:176px;color:#ff00ff;letter-spacing:0;font-weight:bold">1005.1 hpa</div>
<div class="t ip" style="top:194px;color:#fff;letter-spacing:0;font-weight:bold">Gust speed</div>
<div class="t ip" style="top:212px;color:#008000;letter-spacing:0;font-weight:bold">7.5 kmh</div>
<div class="t ip" style="top:230px;color:#fff;letter-spacing:0;font-weight:bold">Direction</div>
<div class="t ip" style="top:247px;color:#00ffff;letter-spacing:0.6px;font-weight:normal">338 °</div>
<div class="t ip" style="top:265px;color:#fff;letter-spacing:0;font-weight:bold">Indoor temp</div>
<div class="t ip" style="top:283px;color:#c0c0c0;letter-spacing:0.6px;font-weight:normal">12.7 °C</div>
<div class="t ip" style="top:301px;color:#fff;letter-spacing:-0.3px;font-weight:bold">Indoor hum</div>
<div class="t ip" style="top:319px;color:#0000ff;letter-spacing:0;font-weight:bold">78 %</div>
<div class="t" style="left:505px;top:539px;font-size:11px;letter-spacing:-0.1px;color:#ffff00">2296</div>
<div class="t" style="left:563px;top:539px;font-size:11px;letter-spacing:-0.1px;color:#f4f4f4">Total records to date</div>
</body></html>
